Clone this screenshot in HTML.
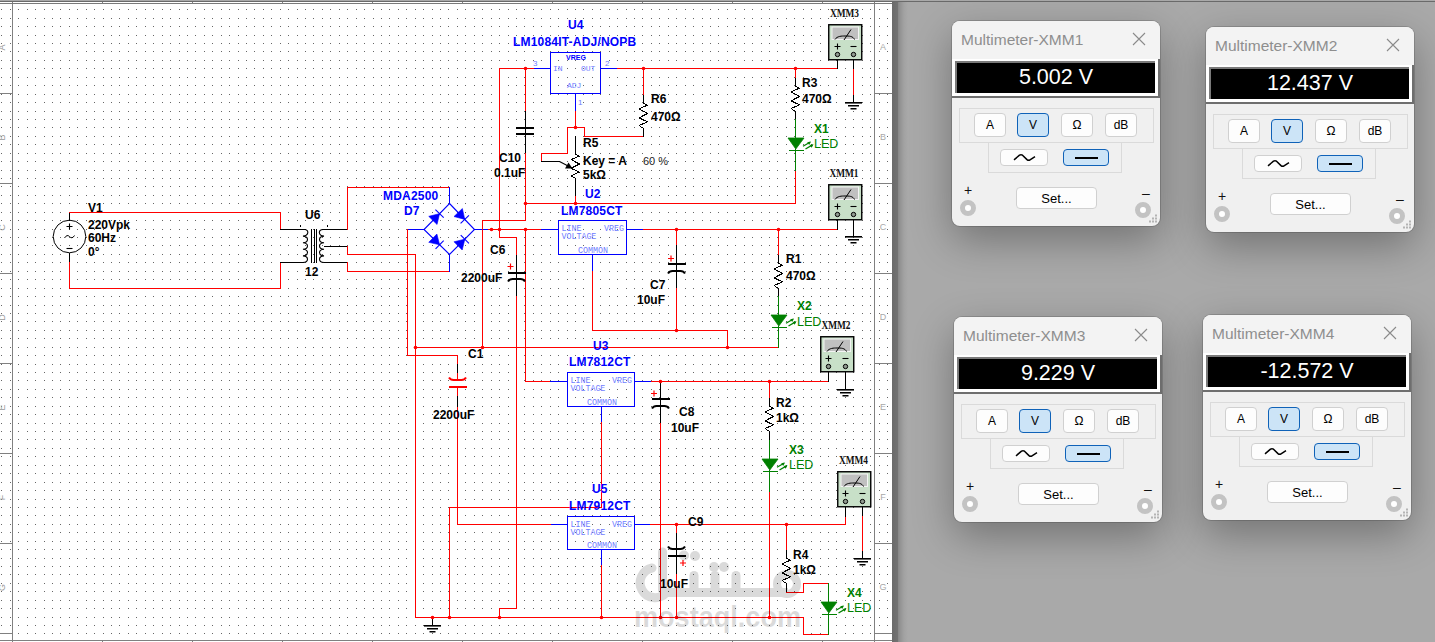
<!DOCTYPE html><html><head><meta charset="utf-8"><style>
html,body{margin:0;padding:0;width:1435px;height:642px;overflow:hidden;background:#a9a9a9;font-family:"Liberation Sans",sans-serif}
#right{position:absolute;left:892px;top:0;width:543px;height:642px;background:linear-gradient(90deg,#6a6a6a 0px,#727272 5.5px,#868686 6px,#929292 8px,#a2a2a2 12px,#a9a9a9 16px)}
#topbar{position:absolute;left:892px;top:0;width:543px;height:2px;background:linear-gradient(#a9a9a9 0 1px,#6a6a6a 1px 2px)}
.win{position:absolute;width:208px;height:205px;background:#f0f0f0;border-radius:8px;box-shadow:0 0 0 1px rgba(0,0,0,0.15),0 14px 42px rgba(0,0,0,0.32);overflow:hidden}
.title{position:absolute;left:0;top:0;width:208px;height:38px;background:#f3f3f3;color:#8e8e8e;font-size:15.5px;line-height:37px;text-indent:9px;white-space:nowrap}
.close{position:absolute;left:180px;top:11px}
.disp{position:absolute;left:0;top:38px;width:206px;height:37px;background:#fff;border-right:2px solid #6e6e6e;border-bottom:2px solid #6e6e6e}
.blk{position:absolute;left:3px;top:2px;width:198px;height:30px;background:#000;border-left:2px solid #7a7a7a;border-top:2px solid #7a7a7a;color:#fff;font-size:21.5px;line-height:28px;text-align:center}
.g1{position:absolute;left:7px;top:87px;width:193px;height:33px;border:1px solid #dadada}
.g2{position:absolute;left:36px;top:121px;width:132px;height:30px;border:1px solid #dadada;border-top:none}
.btn{position:absolute;box-sizing:border-box;background:#fdfdfd;border:1px solid #d0d0d0;border-radius:4px;text-align:center;font-size:13px;line-height:21px;color:#000}
.sel{background:#cce4f7;border-color:#0f62b8}
.pm{position:absolute;font-size:14px;color:#111;line-height:14px}
.term{position:absolute;width:6px;height:6px;border:5px solid #c3c3c3;border-radius:50%;background:#fff}
</style></head><body>
<svg width="892" height="642" style="position:absolute;left:0;top:0">
<rect x="0" y="0" width="892" height="642" fill="#ffffff"/>
<path d="M1 9.5h1m8 0h1m7 0h1m8 0h1m7 0h1m8 0h1m7 0h1m7 0h1m8 0h1m7 0h1m8 0h1m7 0h1m8 0h1m7 0h1m7 0h1m8 0h1m7 0h1m8 0h1m7 0h1m8 0h1m7 0h1m8 0h1m7 0h1m7 0h1m8 0h1m7 0h1m8 0h1m7 0h1m8 0h1m7 0h1m7 0h1m8 0h1m7 0h1m8 0h1m7 0h1m8 0h1m7 0h1m7 0h1m8 0h1m7 0h1m8 0h1m7 0h1m8 0h1m7 0h1m8 0h1m7 0h1m7 0h1m8 0h1m7 0h1m8 0h1m7 0h1m8 0h1m7 0h1m7 0h1m8 0h1m7 0h1m8 0h1m7 0h1m8 0h1m7 0h1m8 0h1m7 0h1m7 0h1m8 0h1m7 0h1m8 0h1m7 0h1m8 0h1m7 0h1m7 0h1m8 0h1m7 0h1m8 0h1m7 0h1m8 0h1m7 0h1m7 0h1m8 0h1m7 0h1m8 0h1m7 0h1m8 0h1m7 0h1m8 0h1m7 0h1m7 0h1m8 0h1m7 0h1m8 0h1m7 0h1m8 0h1m7 0h1m7 0h1m8 0h1m7 0h1m8 0h1m7 0h1m8 0h1m7 0h1m7 0h1m8 0h1m7 0h1m8 0h1m7 0h1m8 0h1m7 0h1M1 18.5h1m8 0h1m7 0h1m8 0h1m7 0h1m8 0h1m7 0h1m7 0h1m8 0h1m7 0h1m8 0h1m7 0h1m8 0h1m7 0h1m7 0h1m8 0h1m7 0h1m8 0h1m7 0h1m8 0h1m7 0h1m8 0h1m7 0h1m7 0h1m8 0h1m7 0h1m8 0h1m7 0h1m8 0h1m7 0h1m7 0h1m8 0h1m7 0h1m8 0h1m7 0h1m8 0h1m7 0h1m7 0h1m8 0h1m7 0h1m8 0h1m7 0h1m8 0h1m7 0h1m8 0h1m7 0h1m7 0h1m8 0h1m7 0h1m8 0h1m7 0h1m8 0h1m7 0h1m7 0h1m8 0h1m7 0h1m8 0h1m7 0h1m8 0h1m7 0h1m8 0h1m7 0h1m7 0h1m8 0h1m7 0h1m8 0h1m7 0h1m8 0h1m7 0h1m7 0h1m8 0h1m7 0h1m8 0h1m7 0h1m8 0h1m7 0h1m7 0h1m8 0h1m7 0h1m8 0h1m7 0h1m8 0h1m7 0h1m8 0h1m7 0h1m7 0h1m8 0h1m7 0h1m8 0h1m7 0h1m8 0h1m7 0h1m7 0h1m8 0h1m7 0h1m8 0h1m7 0h1m8 0h1m7 0h1m7 0h1m8 0h1m7 0h1m8 0h1m7 0h1m8 0h1m7 0h1M1 26.5h1m8 0h1m7 0h1m8 0h1m7 0h1m8 0h1m7 0h1m7 0h1m8 0h1m7 0h1m8 0h1m7 0h1m8 0h1m7 0h1m7 0h1m8 0h1m7 0h1m8 0h1m7 0h1m8 0h1m7 0h1m8 0h1m7 0h1m7 0h1m8 0h1m7 0h1m8 0h1m7 0h1m8 0h1m7 0h1m7 0h1m8 0h1m7 0h1m8 0h1m7 0h1m8 0h1m7 0h1m7 0h1m8 0h1m7 0h1m8 0h1m7 0h1m8 0h1m7 0h1m8 0h1m7 0h1m7 0h1m8 0h1m7 0h1m8 0h1m7 0h1m8 0h1m7 0h1m7 0h1m8 0h1m7 0h1m8 0h1m7 0h1m8 0h1m7 0h1m8 0h1m7 0h1m7 0h1m8 0h1m7 0h1m8 0h1m7 0h1m8 0h1m7 0h1m7 0h1m8 0h1m7 0h1m8 0h1m7 0h1m8 0h1m7 0h1m7 0h1m8 0h1m7 0h1m8 0h1m7 0h1m8 0h1m7 0h1m8 0h1m7 0h1m7 0h1m8 0h1m7 0h1m8 0h1m7 0h1m8 0h1m7 0h1m7 0h1m8 0h1m7 0h1m8 0h1m7 0h1m8 0h1m7 0h1m7 0h1m8 0h1m7 0h1m8 0h1m7 0h1m8 0h1m7 0h1M1 35.5h1m8 0h1m7 0h1m8 0h1m7 0h1m8 0h1m7 0h1m7 0h1m8 0h1m7 0h1m8 0h1m7 0h1m8 0h1m7 0h1m7 0h1m8 0h1m7 0h1m8 0h1m7 0h1m8 0h1m7 0h1m8 0h1m7 0h1m7 0h1m8 0h1m7 0h1m8 0h1m7 0h1m8 0h1m7 0h1m7 0h1m8 0h1m7 0h1m8 0h1m7 0h1m8 0h1m7 0h1m7 0h1m8 0h1m7 0h1m8 0h1m7 0h1m8 0h1m7 0h1m8 0h1m7 0h1m7 0h1m8 0h1m7 0h1m8 0h1m7 0h1m8 0h1m7 0h1m7 0h1m8 0h1m7 0h1m8 0h1m7 0h1m8 0h1m7 0h1m8 0h1m7 0h1m7 0h1m8 0h1m7 0h1m8 0h1m7 0h1m8 0h1m7 0h1m7 0h1m8 0h1m7 0h1m8 0h1m7 0h1m8 0h1m7 0h1m7 0h1m8 0h1m7 0h1m8 0h1m7 0h1m8 0h1m7 0h1m8 0h1m7 0h1m7 0h1m8 0h1m7 0h1m8 0h1m7 0h1m8 0h1m7 0h1m7 0h1m8 0h1m7 0h1m8 0h1m7 0h1m8 0h1m7 0h1m7 0h1m8 0h1m7 0h1m8 0h1m7 0h1m8 0h1m7 0h1M1 43.5h1m8 0h1m7 0h1m8 0h1m7 0h1m8 0h1m7 0h1m7 0h1m8 0h1m7 0h1m8 0h1m7 0h1m8 0h1m7 0h1m7 0h1m8 0h1m7 0h1m8 0h1m7 0h1m8 0h1m7 0h1m8 0h1m7 0h1m7 0h1m8 0h1m7 0h1m8 0h1m7 0h1m8 0h1m7 0h1m7 0h1m8 0h1m7 0h1m8 0h1m7 0h1m8 0h1m7 0h1m7 0h1m8 0h1m7 0h1m8 0h1m7 0h1m8 0h1m7 0h1m8 0h1m7 0h1m7 0h1m8 0h1m7 0h1m8 0h1m7 0h1m8 0h1m7 0h1m7 0h1m8 0h1m7 0h1m8 0h1m7 0h1m8 0h1m7 0h1m8 0h1m7 0h1m7 0h1m8 0h1m7 0h1m8 0h1m7 0h1m8 0h1m7 0h1m7 0h1m8 0h1m7 0h1m8 0h1m7 0h1m8 0h1m7 0h1m7 0h1m8 0h1m7 0h1m8 0h1m7 0h1m8 0h1m7 0h1m8 0h1m7 0h1m7 0h1m8 0h1m7 0h1m8 0h1m7 0h1m8 0h1m7 0h1m7 0h1m8 0h1m7 0h1m8 0h1m7 0h1m8 0h1m7 0h1m7 0h1m8 0h1m7 0h1m8 0h1m7 0h1m8 0h1m7 0h1M1 51.5h1m8 0h1m7 0h1m8 0h1m7 0h1m8 0h1m7 0h1m7 0h1m8 0h1m7 0h1m8 0h1m7 0h1m8 0h1m7 0h1m7 0h1m8 0h1m7 0h1m8 0h1m7 0h1m8 0h1m7 0h1m8 0h1m7 0h1m7 0h1m8 0h1m7 0h1m8 0h1m7 0h1m8 0h1m7 0h1m7 0h1m8 0h1m7 0h1m8 0h1m7 0h1m8 0h1m7 0h1m7 0h1m8 0h1m7 0h1m8 0h1m7 0h1m8 0h1m7 0h1m8 0h1m7 0h1m7 0h1m8 0h1m7 0h1m8 0h1m7 0h1m8 0h1m7 0h1m7 0h1m8 0h1m7 0h1m8 0h1m7 0h1m8 0h1m7 0h1m8 0h1m7 0h1m7 0h1m8 0h1m7 0h1m8 0h1m7 0h1m8 0h1m7 0h1m7 0h1m8 0h1m7 0h1m8 0h1m7 0h1m8 0h1m7 0h1m7 0h1m8 0h1m7 0h1m8 0h1m7 0h1m8 0h1m7 0h1m8 0h1m7 0h1m7 0h1m8 0h1m7 0h1m8 0h1m7 0h1m8 0h1m7 0h1m7 0h1m8 0h1m7 0h1m8 0h1m7 0h1m8 0h1m7 0h1m7 0h1m8 0h1m7 0h1m8 0h1m7 0h1m8 0h1m7 0h1M1 60.5h1m8 0h1m7 0h1m8 0h1m7 0h1m8 0h1m7 0h1m7 0h1m8 0h1m7 0h1m8 0h1m7 0h1m8 0h1m7 0h1m7 0h1m8 0h1m7 0h1m8 0h1m7 0h1m8 0h1m7 0h1m8 0h1m7 0h1m7 0h1m8 0h1m7 0h1m8 0h1m7 0h1m8 0h1m7 0h1m7 0h1m8 0h1m7 0h1m8 0h1m7 0h1m8 0h1m7 0h1m7 0h1m8 0h1m7 0h1m8 0h1m7 0h1m8 0h1m7 0h1m8 0h1m7 0h1m7 0h1m8 0h1m7 0h1m8 0h1m7 0h1m8 0h1m7 0h1m7 0h1m8 0h1m7 0h1m8 0h1m7 0h1m8 0h1m7 0h1m8 0h1m7 0h1m7 0h1m8 0h1m7 0h1m8 0h1m7 0h1m8 0h1m7 0h1m7 0h1m8 0h1m7 0h1m8 0h1m7 0h1m8 0h1m7 0h1m7 0h1m8 0h1m7 0h1m8 0h1m7 0h1m8 0h1m7 0h1m8 0h1m7 0h1m7 0h1m8 0h1m7 0h1m8 0h1m7 0h1m8 0h1m7 0h1m7 0h1m8 0h1m7 0h1m8 0h1m7 0h1m8 0h1m7 0h1m7 0h1m8 0h1m7 0h1m8 0h1m7 0h1m8 0h1m7 0h1M1 68.5h1m8 0h1m7 0h1m8 0h1m7 0h1m8 0h1m7 0h1m7 0h1m8 0h1m7 0h1m8 0h1m7 0h1m8 0h1m7 0h1m7 0h1m8 0h1m7 0h1m8 0h1m7 0h1m8 0h1m7 0h1m8 0h1m7 0h1m7 0h1m8 0h1m7 0h1m8 0h1m7 0h1m8 0h1m7 0h1m7 0h1m8 0h1m7 0h1m8 0h1m7 0h1m8 0h1m7 0h1m7 0h1m8 0h1m7 0h1m8 0h1m7 0h1m8 0h1m7 0h1m8 0h1m7 0h1m7 0h1m8 0h1m7 0h1m8 0h1m7 0h1m8 0h1m7 0h1m7 0h1m8 0h1m7 0h1m8 0h1m7 0h1m8 0h1m7 0h1m8 0h1m7 0h1m7 0h1m8 0h1m7 0h1m8 0h1m7 0h1m8 0h1m7 0h1m7 0h1m8 0h1m7 0h1m8 0h1m7 0h1m8 0h1m7 0h1m7 0h1m8 0h1m7 0h1m8 0h1m7 0h1m8 0h1m7 0h1m8 0h1m7 0h1m7 0h1m8 0h1m7 0h1m8 0h1m7 0h1m8 0h1m7 0h1m7 0h1m8 0h1m7 0h1m8 0h1m7 0h1m8 0h1m7 0h1m7 0h1m8 0h1m7 0h1m8 0h1m7 0h1m8 0h1m7 0h1M1 77.5h1m8 0h1m7 0h1m8 0h1m7 0h1m8 0h1m7 0h1m7 0h1m8 0h1m7 0h1m8 0h1m7 0h1m8 0h1m7 0h1m7 0h1m8 0h1m7 0h1m8 0h1m7 0h1m8 0h1m7 0h1m8 0h1m7 0h1m7 0h1m8 0h1m7 0h1m8 0h1m7 0h1m8 0h1m7 0h1m7 0h1m8 0h1m7 0h1m8 0h1m7 0h1m8 0h1m7 0h1m7 0h1m8 0h1m7 0h1m8 0h1m7 0h1m8 0h1m7 0h1m8 0h1m7 0h1m7 0h1m8 0h1m7 0h1m8 0h1m7 0h1m8 0h1m7 0h1m7 0h1m8 0h1m7 0h1m8 0h1m7 0h1m8 0h1m7 0h1m8 0h1m7 0h1m7 0h1m8 0h1m7 0h1m8 0h1m7 0h1m8 0h1m7 0h1m7 0h1m8 0h1m7 0h1m8 0h1m7 0h1m8 0h1m7 0h1m7 0h1m8 0h1m7 0h1m8 0h1m7 0h1m8 0h1m7 0h1m8 0h1m7 0h1m7 0h1m8 0h1m7 0h1m8 0h1m7 0h1m8 0h1m7 0h1m7 0h1m8 0h1m7 0h1m8 0h1m7 0h1m8 0h1m7 0h1m7 0h1m8 0h1m7 0h1m8 0h1m7 0h1m8 0h1m7 0h1M1 85.5h1m8 0h1m7 0h1m8 0h1m7 0h1m8 0h1m7 0h1m7 0h1m8 0h1m7 0h1m8 0h1m7 0h1m8 0h1m7 0h1m7 0h1m8 0h1m7 0h1m8 0h1m7 0h1m8 0h1m7 0h1m8 0h1m7 0h1m7 0h1m8 0h1m7 0h1m8 0h1m7 0h1m8 0h1m7 0h1m7 0h1m8 0h1m7 0h1m8 0h1m7 0h1m8 0h1m7 0h1m7 0h1m8 0h1m7 0h1m8 0h1m7 0h1m8 0h1m7 0h1m8 0h1m7 0h1m7 0h1m8 0h1m7 0h1m8 0h1m7 0h1m8 0h1m7 0h1m7 0h1m8 0h1m7 0h1m8 0h1m7 0h1m8 0h1m7 0h1m8 0h1m7 0h1m7 0h1m8 0h1m7 0h1m8 0h1m7 0h1m8 0h1m7 0h1m7 0h1m8 0h1m7 0h1m8 0h1m7 0h1m8 0h1m7 0h1m7 0h1m8 0h1m7 0h1m8 0h1m7 0h1m8 0h1m7 0h1m8 0h1m7 0h1m7 0h1m8 0h1m7 0h1m8 0h1m7 0h1m8 0h1m7 0h1m7 0h1m8 0h1m7 0h1m8 0h1m7 0h1m8 0h1m7 0h1m7 0h1m8 0h1m7 0h1m8 0h1m7 0h1m8 0h1m7 0h1M1 94.5h1m8 0h1m7 0h1m8 0h1m7 0h1m8 0h1m7 0h1m7 0h1m8 0h1m7 0h1m8 0h1m7 0h1m8 0h1m7 0h1m7 0h1m8 0h1m7 0h1m8 0h1m7 0h1m8 0h1m7 0h1m8 0h1m7 0h1m7 0h1m8 0h1m7 0h1m8 0h1m7 0h1m8 0h1m7 0h1m7 0h1m8 0h1m7 0h1m8 0h1m7 0h1m8 0h1m7 0h1m7 0h1m8 0h1m7 0h1m8 0h1m7 0h1m8 0h1m7 0h1m8 0h1m7 0h1m7 0h1m8 0h1m7 0h1m8 0h1m7 0h1m8 0h1m7 0h1m7 0h1m8 0h1m7 0h1m8 0h1m7 0h1m8 0h1m7 0h1m8 0h1m7 0h1m7 0h1m8 0h1m7 0h1m8 0h1m7 0h1m8 0h1m7 0h1m7 0h1m8 0h1m7 0h1m8 0h1m7 0h1m8 0h1m7 0h1m7 0h1m8 0h1m7 0h1m8 0h1m7 0h1m8 0h1m7 0h1m8 0h1m7 0h1m7 0h1m8 0h1m7 0h1m8 0h1m7 0h1m8 0h1m7 0h1m7 0h1m8 0h1m7 0h1m8 0h1m7 0h1m8 0h1m7 0h1m7 0h1m8 0h1m7 0h1m8 0h1m7 0h1m8 0h1m7 0h1M1 102.5h1m8 0h1m7 0h1m8 0h1m7 0h1m8 0h1m7 0h1m7 0h1m8 0h1m7 0h1m8 0h1m7 0h1m8 0h1m7 0h1m7 0h1m8 0h1m7 0h1m8 0h1m7 0h1m8 0h1m7 0h1m8 0h1m7 0h1m7 0h1m8 0h1m7 0h1m8 0h1m7 0h1m8 0h1m7 0h1m7 0h1m8 0h1m7 0h1m8 0h1m7 0h1m8 0h1m7 0h1m7 0h1m8 0h1m7 0h1m8 0h1m7 0h1m8 0h1m7 0h1m8 0h1m7 0h1m7 0h1m8 0h1m7 0h1m8 0h1m7 0h1m8 0h1m7 0h1m7 0h1m8 0h1m7 0h1m8 0h1m7 0h1m8 0h1m7 0h1m8 0h1m7 0h1m7 0h1m8 0h1m7 0h1m8 0h1m7 0h1m8 0h1m7 0h1m7 0h1m8 0h1m7 0h1m8 0h1m7 0h1m8 0h1m7 0h1m7 0h1m8 0h1m7 0h1m8 0h1m7 0h1m8 0h1m7 0h1m8 0h1m7 0h1m7 0h1m8 0h1m7 0h1m8 0h1m7 0h1m8 0h1m7 0h1m7 0h1m8 0h1m7 0h1m8 0h1m7 0h1m8 0h1m7 0h1m7 0h1m8 0h1m7 0h1m8 0h1m7 0h1m8 0h1m7 0h1M1 111.5h1m8 0h1m7 0h1m8 0h1m7 0h1m8 0h1m7 0h1m7 0h1m8 0h1m7 0h1m8 0h1m7 0h1m8 0h1m7 0h1m7 0h1m8 0h1m7 0h1m8 0h1m7 0h1m8 0h1m7 0h1m8 0h1m7 0h1m7 0h1m8 0h1m7 0h1m8 0h1m7 0h1m8 0h1m7 0h1m7 0h1m8 0h1m7 0h1m8 0h1m7 0h1m8 0h1m7 0h1m7 0h1m8 0h1m7 0h1m8 0h1m7 0h1m8 0h1m7 0h1m8 0h1m7 0h1m7 0h1m8 0h1m7 0h1m8 0h1m7 0h1m8 0h1m7 0h1m7 0h1m8 0h1m7 0h1m8 0h1m7 0h1m8 0h1m7 0h1m8 0h1m7 0h1m7 0h1m8 0h1m7 0h1m8 0h1m7 0h1m8 0h1m7 0h1m7 0h1m8 0h1m7 0h1m8 0h1m7 0h1m8 0h1m7 0h1m7 0h1m8 0h1m7 0h1m8 0h1m7 0h1m8 0h1m7 0h1m8 0h1m7 0h1m7 0h1m8 0h1m7 0h1m8 0h1m7 0h1m8 0h1m7 0h1m7 0h1m8 0h1m7 0h1m8 0h1m7 0h1m8 0h1m7 0h1m7 0h1m8 0h1m7 0h1m8 0h1m7 0h1m8 0h1m7 0h1M1 119.5h1m8 0h1m7 0h1m8 0h1m7 0h1m8 0h1m7 0h1m7 0h1m8 0h1m7 0h1m8 0h1m7 0h1m8 0h1m7 0h1m7 0h1m8 0h1m7 0h1m8 0h1m7 0h1m8 0h1m7 0h1m8 0h1m7 0h1m7 0h1m8 0h1m7 0h1m8 0h1m7 0h1m8 0h1m7 0h1m7 0h1m8 0h1m7 0h1m8 0h1m7 0h1m8 0h1m7 0h1m7 0h1m8 0h1m7 0h1m8 0h1m7 0h1m8 0h1m7 0h1m8 0h1m7 0h1m7 0h1m8 0h1m7 0h1m8 0h1m7 0h1m8 0h1m7 0h1m7 0h1m8 0h1m7 0h1m8 0h1m7 0h1m8 0h1m7 0h1m8 0h1m7 0h1m7 0h1m8 0h1m7 0h1m8 0h1m7 0h1m8 0h1m7 0h1m7 0h1m8 0h1m7 0h1m8 0h1m7 0h1m8 0h1m7 0h1m7 0h1m8 0h1m7 0h1m8 0h1m7 0h1m8 0h1m7 0h1m8 0h1m7 0h1m7 0h1m8 0h1m7 0h1m8 0h1m7 0h1m8 0h1m7 0h1m7 0h1m8 0h1m7 0h1m8 0h1m7 0h1m8 0h1m7 0h1m7 0h1m8 0h1m7 0h1m8 0h1m7 0h1m8 0h1m7 0h1M1 127.5h1m8 0h1m7 0h1m8 0h1m7 0h1m8 0h1m7 0h1m7 0h1m8 0h1m7 0h1m8 0h1m7 0h1m8 0h1m7 0h1m7 0h1m8 0h1m7 0h1m8 0h1m7 0h1m8 0h1m7 0h1m8 0h1m7 0h1m7 0h1m8 0h1m7 0h1m8 0h1m7 0h1m8 0h1m7 0h1m7 0h1m8 0h1m7 0h1m8 0h1m7 0h1m8 0h1m7 0h1m7 0h1m8 0h1m7 0h1m8 0h1m7 0h1m8 0h1m7 0h1m8 0h1m7 0h1m7 0h1m8 0h1m7 0h1m8 0h1m7 0h1m8 0h1m7 0h1m7 0h1m8 0h1m7 0h1m8 0h1m7 0h1m8 0h1m7 0h1m8 0h1m7 0h1m7 0h1m8 0h1m7 0h1m8 0h1m7 0h1m8 0h1m7 0h1m7 0h1m8 0h1m7 0h1m8 0h1m7 0h1m8 0h1m7 0h1m7 0h1m8 0h1m7 0h1m8 0h1m7 0h1m8 0h1m7 0h1m8 0h1m7 0h1m7 0h1m8 0h1m7 0h1m8 0h1m7 0h1m8 0h1m7 0h1m7 0h1m8 0h1m7 0h1m8 0h1m7 0h1m8 0h1m7 0h1m7 0h1m8 0h1m7 0h1m8 0h1m7 0h1m8 0h1m7 0h1M1 136.5h1m8 0h1m7 0h1m8 0h1m7 0h1m8 0h1m7 0h1m7 0h1m8 0h1m7 0h1m8 0h1m7 0h1m8 0h1m7 0h1m7 0h1m8 0h1m7 0h1m8 0h1m7 0h1m8 0h1m7 0h1m8 0h1m7 0h1m7 0h1m8 0h1m7 0h1m8 0h1m7 0h1m8 0h1m7 0h1m7 0h1m8 0h1m7 0h1m8 0h1m7 0h1m8 0h1m7 0h1m7 0h1m8 0h1m7 0h1m8 0h1m7 0h1m8 0h1m7 0h1m8 0h1m7 0h1m7 0h1m8 0h1m7 0h1m8 0h1m7 0h1m8 0h1m7 0h1m7 0h1m8 0h1m7 0h1m8 0h1m7 0h1m8 0h1m7 0h1m8 0h1m7 0h1m7 0h1m8 0h1m7 0h1m8 0h1m7 0h1m8 0h1m7 0h1m7 0h1m8 0h1m7 0h1m8 0h1m7 0h1m8 0h1m7 0h1m7 0h1m8 0h1m7 0h1m8 0h1m7 0h1m8 0h1m7 0h1m8 0h1m7 0h1m7 0h1m8 0h1m7 0h1m8 0h1m7 0h1m8 0h1m7 0h1m7 0h1m8 0h1m7 0h1m8 0h1m7 0h1m8 0h1m7 0h1m7 0h1m8 0h1m7 0h1m8 0h1m7 0h1m8 0h1m7 0h1M1 144.5h1m8 0h1m7 0h1m8 0h1m7 0h1m8 0h1m7 0h1m7 0h1m8 0h1m7 0h1m8 0h1m7 0h1m8 0h1m7 0h1m7 0h1m8 0h1m7 0h1m8 0h1m7 0h1m8 0h1m7 0h1m8 0h1m7 0h1m7 0h1m8 0h1m7 0h1m8 0h1m7 0h1m8 0h1m7 0h1m7 0h1m8 0h1m7 0h1m8 0h1m7 0h1m8 0h1m7 0h1m7 0h1m8 0h1m7 0h1m8 0h1m7 0h1m8 0h1m7 0h1m8 0h1m7 0h1m7 0h1m8 0h1m7 0h1m8 0h1m7 0h1m8 0h1m7 0h1m7 0h1m8 0h1m7 0h1m8 0h1m7 0h1m8 0h1m7 0h1m8 0h1m7 0h1m7 0h1m8 0h1m7 0h1m8 0h1m7 0h1m8 0h1m7 0h1m7 0h1m8 0h1m7 0h1m8 0h1m7 0h1m8 0h1m7 0h1m7 0h1m8 0h1m7 0h1m8 0h1m7 0h1m8 0h1m7 0h1m8 0h1m7 0h1m7 0h1m8 0h1m7 0h1m8 0h1m7 0h1m8 0h1m7 0h1m7 0h1m8 0h1m7 0h1m8 0h1m7 0h1m8 0h1m7 0h1m7 0h1m8 0h1m7 0h1m8 0h1m7 0h1m8 0h1m7 0h1M1 153.5h1m8 0h1m7 0h1m8 0h1m7 0h1m8 0h1m7 0h1m7 0h1m8 0h1m7 0h1m8 0h1m7 0h1m8 0h1m7 0h1m7 0h1m8 0h1m7 0h1m8 0h1m7 0h1m8 0h1m7 0h1m8 0h1m7 0h1m7 0h1m8 0h1m7 0h1m8 0h1m7 0h1m8 0h1m7 0h1m7 0h1m8 0h1m7 0h1m8 0h1m7 0h1m8 0h1m7 0h1m7 0h1m8 0h1m7 0h1m8 0h1m7 0h1m8 0h1m7 0h1m8 0h1m7 0h1m7 0h1m8 0h1m7 0h1m8 0h1m7 0h1m8 0h1m7 0h1m7 0h1m8 0h1m7 0h1m8 0h1m7 0h1m8 0h1m7 0h1m8 0h1m7 0h1m7 0h1m8 0h1m7 0h1m8 0h1m7 0h1m8 0h1m7 0h1m7 0h1m8 0h1m7 0h1m8 0h1m7 0h1m8 0h1m7 0h1m7 0h1m8 0h1m7 0h1m8 0h1m7 0h1m8 0h1m7 0h1m8 0h1m7 0h1m7 0h1m8 0h1m7 0h1m8 0h1m7 0h1m8 0h1m7 0h1m7 0h1m8 0h1m7 0h1m8 0h1m7 0h1m8 0h1m7 0h1m7 0h1m8 0h1m7 0h1m8 0h1m7 0h1m8 0h1m7 0h1M1 161.5h1m8 0h1m7 0h1m8 0h1m7 0h1m8 0h1m7 0h1m7 0h1m8 0h1m7 0h1m8 0h1m7 0h1m8 0h1m7 0h1m7 0h1m8 0h1m7 0h1m8 0h1m7 0h1m8 0h1m7 0h1m8 0h1m7 0h1m7 0h1m8 0h1m7 0h1m8 0h1m7 0h1m8 0h1m7 0h1m7 0h1m8 0h1m7 0h1m8 0h1m7 0h1m8 0h1m7 0h1m7 0h1m8 0h1m7 0h1m8 0h1m7 0h1m8 0h1m7 0h1m8 0h1m7 0h1m7 0h1m8 0h1m7 0h1m8 0h1m7 0h1m8 0h1m7 0h1m7 0h1m8 0h1m7 0h1m8 0h1m7 0h1m8 0h1m7 0h1m8 0h1m7 0h1m7 0h1m8 0h1m7 0h1m8 0h1m7 0h1m8 0h1m7 0h1m7 0h1m8 0h1m7 0h1m8 0h1m7 0h1m8 0h1m7 0h1m7 0h1m8 0h1m7 0h1m8 0h1m7 0h1m8 0h1m7 0h1m8 0h1m7 0h1m7 0h1m8 0h1m7 0h1m8 0h1m7 0h1m8 0h1m7 0h1m7 0h1m8 0h1m7 0h1m8 0h1m7 0h1m8 0h1m7 0h1m7 0h1m8 0h1m7 0h1m8 0h1m7 0h1m8 0h1m7 0h1M1 170.5h1m8 0h1m7 0h1m8 0h1m7 0h1m8 0h1m7 0h1m7 0h1m8 0h1m7 0h1m8 0h1m7 0h1m8 0h1m7 0h1m7 0h1m8 0h1m7 0h1m8 0h1m7 0h1m8 0h1m7 0h1m8 0h1m7 0h1m7 0h1m8 0h1m7 0h1m8 0h1m7 0h1m8 0h1m7 0h1m7 0h1m8 0h1m7 0h1m8 0h1m7 0h1m8 0h1m7 0h1m7 0h1m8 0h1m7 0h1m8 0h1m7 0h1m8 0h1m7 0h1m8 0h1m7 0h1m7 0h1m8 0h1m7 0h1m8 0h1m7 0h1m8 0h1m7 0h1m7 0h1m8 0h1m7 0h1m8 0h1m7 0h1m8 0h1m7 0h1m8 0h1m7 0h1m7 0h1m8 0h1m7 0h1m8 0h1m7 0h1m8 0h1m7 0h1m7 0h1m8 0h1m7 0h1m8 0h1m7 0h1m8 0h1m7 0h1m7 0h1m8 0h1m7 0h1m8 0h1m7 0h1m8 0h1m7 0h1m8 0h1m7 0h1m7 0h1m8 0h1m7 0h1m8 0h1m7 0h1m8 0h1m7 0h1m7 0h1m8 0h1m7 0h1m8 0h1m7 0h1m8 0h1m7 0h1m7 0h1m8 0h1m7 0h1m8 0h1m7 0h1m8 0h1m7 0h1M1 178.5h1m8 0h1m7 0h1m8 0h1m7 0h1m8 0h1m7 0h1m7 0h1m8 0h1m7 0h1m8 0h1m7 0h1m8 0h1m7 0h1m7 0h1m8 0h1m7 0h1m8 0h1m7 0h1m8 0h1m7 0h1m8 0h1m7 0h1m7 0h1m8 0h1m7 0h1m8 0h1m7 0h1m8 0h1m7 0h1m7 0h1m8 0h1m7 0h1m8 0h1m7 0h1m8 0h1m7 0h1m7 0h1m8 0h1m7 0h1m8 0h1m7 0h1m8 0h1m7 0h1m8 0h1m7 0h1m7 0h1m8 0h1m7 0h1m8 0h1m7 0h1m8 0h1m7 0h1m7 0h1m8 0h1m7 0h1m8 0h1m7 0h1m8 0h1m7 0h1m8 0h1m7 0h1m7 0h1m8 0h1m7 0h1m8 0h1m7 0h1m8 0h1m7 0h1m7 0h1m8 0h1m7 0h1m8 0h1m7 0h1m8 0h1m7 0h1m7 0h1m8 0h1m7 0h1m8 0h1m7 0h1m8 0h1m7 0h1m8 0h1m7 0h1m7 0h1m8 0h1m7 0h1m8 0h1m7 0h1m8 0h1m7 0h1m7 0h1m8 0h1m7 0h1m8 0h1m7 0h1m8 0h1m7 0h1m7 0h1m8 0h1m7 0h1m8 0h1m7 0h1m8 0h1m7 0h1M1 186.5h1m8 0h1m7 0h1m8 0h1m7 0h1m8 0h1m7 0h1m7 0h1m8 0h1m7 0h1m8 0h1m7 0h1m8 0h1m7 0h1m7 0h1m8 0h1m7 0h1m8 0h1m7 0h1m8 0h1m7 0h1m8 0h1m7 0h1m7 0h1m8 0h1m7 0h1m8 0h1m7 0h1m8 0h1m7 0h1m7 0h1m8 0h1m7 0h1m8 0h1m7 0h1m8 0h1m7 0h1m7 0h1m8 0h1m7 0h1m8 0h1m7 0h1m8 0h1m7 0h1m8 0h1m7 0h1m7 0h1m8 0h1m7 0h1m8 0h1m7 0h1m8 0h1m7 0h1m7 0h1m8 0h1m7 0h1m8 0h1m7 0h1m8 0h1m7 0h1m8 0h1m7 0h1m7 0h1m8 0h1m7 0h1m8 0h1m7 0h1m8 0h1m7 0h1m7 0h1m8 0h1m7 0h1m8 0h1m7 0h1m8 0h1m7 0h1m7 0h1m8 0h1m7 0h1m8 0h1m7 0h1m8 0h1m7 0h1m8 0h1m7 0h1m7 0h1m8 0h1m7 0h1m8 0h1m7 0h1m8 0h1m7 0h1m7 0h1m8 0h1m7 0h1m8 0h1m7 0h1m8 0h1m7 0h1m7 0h1m8 0h1m7 0h1m8 0h1m7 0h1m8 0h1m7 0h1M1 195.5h1m8 0h1m7 0h1m8 0h1m7 0h1m8 0h1m7 0h1m7 0h1m8 0h1m7 0h1m8 0h1m7 0h1m8 0h1m7 0h1m7 0h1m8 0h1m7 0h1m8 0h1m7 0h1m8 0h1m7 0h1m8 0h1m7 0h1m7 0h1m8 0h1m7 0h1m8 0h1m7 0h1m8 0h1m7 0h1m7 0h1m8 0h1m7 0h1m8 0h1m7 0h1m8 0h1m7 0h1m7 0h1m8 0h1m7 0h1m8 0h1m7 0h1m8 0h1m7 0h1m8 0h1m7 0h1m7 0h1m8 0h1m7 0h1m8 0h1m7 0h1m8 0h1m7 0h1m7 0h1m8 0h1m7 0h1m8 0h1m7 0h1m8 0h1m7 0h1m8 0h1m7 0h1m7 0h1m8 0h1m7 0h1m8 0h1m7 0h1m8 0h1m7 0h1m7 0h1m8 0h1m7 0h1m8 0h1m7 0h1m8 0h1m7 0h1m7 0h1m8 0h1m7 0h1m8 0h1m7 0h1m8 0h1m7 0h1m8 0h1m7 0h1m7 0h1m8 0h1m7 0h1m8 0h1m7 0h1m8 0h1m7 0h1m7 0h1m8 0h1m7 0h1m8 0h1m7 0h1m8 0h1m7 0h1m7 0h1m8 0h1m7 0h1m8 0h1m7 0h1m8 0h1m7 0h1M1 203.5h1m8 0h1m7 0h1m8 0h1m7 0h1m8 0h1m7 0h1m7 0h1m8 0h1m7 0h1m8 0h1m7 0h1m8 0h1m7 0h1m7 0h1m8 0h1m7 0h1m8 0h1m7 0h1m8 0h1m7 0h1m8 0h1m7 0h1m7 0h1m8 0h1m7 0h1m8 0h1m7 0h1m8 0h1m7 0h1m7 0h1m8 0h1m7 0h1m8 0h1m7 0h1m8 0h1m7 0h1m7 0h1m8 0h1m7 0h1m8 0h1m7 0h1m8 0h1m7 0h1m8 0h1m7 0h1m7 0h1m8 0h1m7 0h1m8 0h1m7 0h1m8 0h1m7 0h1m7 0h1m8 0h1m7 0h1m8 0h1m7 0h1m8 0h1m7 0h1m8 0h1m7 0h1m7 0h1m8 0h1m7 0h1m8 0h1m7 0h1m8 0h1m7 0h1m7 0h1m8 0h1m7 0h1m8 0h1m7 0h1m8 0h1m7 0h1m7 0h1m8 0h1m7 0h1m8 0h1m7 0h1m8 0h1m7 0h1m8 0h1m7 0h1m7 0h1m8 0h1m7 0h1m8 0h1m7 0h1m8 0h1m7 0h1m7 0h1m8 0h1m7 0h1m8 0h1m7 0h1m8 0h1m7 0h1m7 0h1m8 0h1m7 0h1m8 0h1m7 0h1m8 0h1m7 0h1M1 212.5h1m8 0h1m7 0h1m8 0h1m7 0h1m8 0h1m7 0h1m7 0h1m8 0h1m7 0h1m8 0h1m7 0h1m8 0h1m7 0h1m7 0h1m8 0h1m7 0h1m8 0h1m7 0h1m8 0h1m7 0h1m8 0h1m7 0h1m7 0h1m8 0h1m7 0h1m8 0h1m7 0h1m8 0h1m7 0h1m7 0h1m8 0h1m7 0h1m8 0h1m7 0h1m8 0h1m7 0h1m7 0h1m8 0h1m7 0h1m8 0h1m7 0h1m8 0h1m7 0h1m8 0h1m7 0h1m7 0h1m8 0h1m7 0h1m8 0h1m7 0h1m8 0h1m7 0h1m7 0h1m8 0h1m7 0h1m8 0h1m7 0h1m8 0h1m7 0h1m8 0h1m7 0h1m7 0h1m8 0h1m7 0h1m8 0h1m7 0h1m8 0h1m7 0h1m7 0h1m8 0h1m7 0h1m8 0h1m7 0h1m8 0h1m7 0h1m7 0h1m8 0h1m7 0h1m8 0h1m7 0h1m8 0h1m7 0h1m8 0h1m7 0h1m7 0h1m8 0h1m7 0h1m8 0h1m7 0h1m8 0h1m7 0h1m7 0h1m8 0h1m7 0h1m8 0h1m7 0h1m8 0h1m7 0h1m7 0h1m8 0h1m7 0h1m8 0h1m7 0h1m8 0h1m7 0h1M1 220.5h1m8 0h1m7 0h1m8 0h1m7 0h1m8 0h1m7 0h1m7 0h1m8 0h1m7 0h1m8 0h1m7 0h1m8 0h1m7 0h1m7 0h1m8 0h1m7 0h1m8 0h1m7 0h1m8 0h1m7 0h1m8 0h1m7 0h1m7 0h1m8 0h1m7 0h1m8 0h1m7 0h1m8 0h1m7 0h1m7 0h1m8 0h1m7 0h1m8 0h1m7 0h1m8 0h1m7 0h1m7 0h1m8 0h1m7 0h1m8 0h1m7 0h1m8 0h1m7 0h1m8 0h1m7 0h1m7 0h1m8 0h1m7 0h1m8 0h1m7 0h1m8 0h1m7 0h1m7 0h1m8 0h1m7 0h1m8 0h1m7 0h1m8 0h1m7 0h1m8 0h1m7 0h1m7 0h1m8 0h1m7 0h1m8 0h1m7 0h1m8 0h1m7 0h1m7 0h1m8 0h1m7 0h1m8 0h1m7 0h1m8 0h1m7 0h1m7 0h1m8 0h1m7 0h1m8 0h1m7 0h1m8 0h1m7 0h1m8 0h1m7 0h1m7 0h1m8 0h1m7 0h1m8 0h1m7 0h1m8 0h1m7 0h1m7 0h1m8 0h1m7 0h1m8 0h1m7 0h1m8 0h1m7 0h1m7 0h1m8 0h1m7 0h1m8 0h1m7 0h1m8 0h1m7 0h1M1 229.5h1m8 0h1m7 0h1m8 0h1m7 0h1m8 0h1m7 0h1m7 0h1m8 0h1m7 0h1m8 0h1m7 0h1m8 0h1m7 0h1m7 0h1m8 0h1m7 0h1m8 0h1m7 0h1m8 0h1m7 0h1m8 0h1m7 0h1m7 0h1m8 0h1m7 0h1m8 0h1m7 0h1m8 0h1m7 0h1m7 0h1m8 0h1m7 0h1m8 0h1m7 0h1m8 0h1m7 0h1m7 0h1m8 0h1m7 0h1m8 0h1m7 0h1m8 0h1m7 0h1m8 0h1m7 0h1m7 0h1m8 0h1m7 0h1m8 0h1m7 0h1m8 0h1m7 0h1m7 0h1m8 0h1m7 0h1m8 0h1m7 0h1m8 0h1m7 0h1m8 0h1m7 0h1m7 0h1m8 0h1m7 0h1m8 0h1m7 0h1m8 0h1m7 0h1m7 0h1m8 0h1m7 0h1m8 0h1m7 0h1m8 0h1m7 0h1m7 0h1m8 0h1m7 0h1m8 0h1m7 0h1m8 0h1m7 0h1m8 0h1m7 0h1m7 0h1m8 0h1m7 0h1m8 0h1m7 0h1m8 0h1m7 0h1m7 0h1m8 0h1m7 0h1m8 0h1m7 0h1m8 0h1m7 0h1m7 0h1m8 0h1m7 0h1m8 0h1m7 0h1m8 0h1m7 0h1M1 237.5h1m8 0h1m7 0h1m8 0h1m7 0h1m8 0h1m7 0h1m7 0h1m8 0h1m7 0h1m8 0h1m7 0h1m8 0h1m7 0h1m7 0h1m8 0h1m7 0h1m8 0h1m7 0h1m8 0h1m7 0h1m8 0h1m7 0h1m7 0h1m8 0h1m7 0h1m8 0h1m7 0h1m8 0h1m7 0h1m7 0h1m8 0h1m7 0h1m8 0h1m7 0h1m8 0h1m7 0h1m7 0h1m8 0h1m7 0h1m8 0h1m7 0h1m8 0h1m7 0h1m8 0h1m7 0h1m7 0h1m8 0h1m7 0h1m8 0h1m7 0h1m8 0h1m7 0h1m7 0h1m8 0h1m7 0h1m8 0h1m7 0h1m8 0h1m7 0h1m8 0h1m7 0h1m7 0h1m8 0h1m7 0h1m8 0h1m7 0h1m8 0h1m7 0h1m7 0h1m8 0h1m7 0h1m8 0h1m7 0h1m8 0h1m7 0h1m7 0h1m8 0h1m7 0h1m8 0h1m7 0h1m8 0h1m7 0h1m8 0h1m7 0h1m7 0h1m8 0h1m7 0h1m8 0h1m7 0h1m8 0h1m7 0h1m7 0h1m8 0h1m7 0h1m8 0h1m7 0h1m8 0h1m7 0h1m7 0h1m8 0h1m7 0h1m8 0h1m7 0h1m8 0h1m7 0h1M1 245.5h1m8 0h1m7 0h1m8 0h1m7 0h1m8 0h1m7 0h1m7 0h1m8 0h1m7 0h1m8 0h1m7 0h1m8 0h1m7 0h1m7 0h1m8 0h1m7 0h1m8 0h1m7 0h1m8 0h1m7 0h1m8 0h1m7 0h1m7 0h1m8 0h1m7 0h1m8 0h1m7 0h1m8 0h1m7 0h1m7 0h1m8 0h1m7 0h1m8 0h1m7 0h1m8 0h1m7 0h1m7 0h1m8 0h1m7 0h1m8 0h1m7 0h1m8 0h1m7 0h1m8 0h1m7 0h1m7 0h1m8 0h1m7 0h1m8 0h1m7 0h1m8 0h1m7 0h1m7 0h1m8 0h1m7 0h1m8 0h1m7 0h1m8 0h1m7 0h1m8 0h1m7 0h1m7 0h1m8 0h1m7 0h1m8 0h1m7 0h1m8 0h1m7 0h1m7 0h1m8 0h1m7 0h1m8 0h1m7 0h1m8 0h1m7 0h1m7 0h1m8 0h1m7 0h1m8 0h1m7 0h1m8 0h1m7 0h1m8 0h1m7 0h1m7 0h1m8 0h1m7 0h1m8 0h1m7 0h1m8 0h1m7 0h1m7 0h1m8 0h1m7 0h1m8 0h1m7 0h1m8 0h1m7 0h1m7 0h1m8 0h1m7 0h1m8 0h1m7 0h1m8 0h1m7 0h1M1 254.5h1m8 0h1m7 0h1m8 0h1m7 0h1m8 0h1m7 0h1m7 0h1m8 0h1m7 0h1m8 0h1m7 0h1m8 0h1m7 0h1m7 0h1m8 0h1m7 0h1m8 0h1m7 0h1m8 0h1m7 0h1m8 0h1m7 0h1m7 0h1m8 0h1m7 0h1m8 0h1m7 0h1m8 0h1m7 0h1m7 0h1m8 0h1m7 0h1m8 0h1m7 0h1m8 0h1m7 0h1m7 0h1m8 0h1m7 0h1m8 0h1m7 0h1m8 0h1m7 0h1m8 0h1m7 0h1m7 0h1m8 0h1m7 0h1m8 0h1m7 0h1m8 0h1m7 0h1m7 0h1m8 0h1m7 0h1m8 0h1m7 0h1m8 0h1m7 0h1m8 0h1m7 0h1m7 0h1m8 0h1m7 0h1m8 0h1m7 0h1m8 0h1m7 0h1m7 0h1m8 0h1m7 0h1m8 0h1m7 0h1m8 0h1m7 0h1m7 0h1m8 0h1m7 0h1m8 0h1m7 0h1m8 0h1m7 0h1m8 0h1m7 0h1m7 0h1m8 0h1m7 0h1m8 0h1m7 0h1m8 0h1m7 0h1m7 0h1m8 0h1m7 0h1m8 0h1m7 0h1m8 0h1m7 0h1m7 0h1m8 0h1m7 0h1m8 0h1m7 0h1m8 0h1m7 0h1M1 262.5h1m8 0h1m7 0h1m8 0h1m7 0h1m8 0h1m7 0h1m7 0h1m8 0h1m7 0h1m8 0h1m7 0h1m8 0h1m7 0h1m7 0h1m8 0h1m7 0h1m8 0h1m7 0h1m8 0h1m7 0h1m8 0h1m7 0h1m7 0h1m8 0h1m7 0h1m8 0h1m7 0h1m8 0h1m7 0h1m7 0h1m8 0h1m7 0h1m8 0h1m7 0h1m8 0h1m7 0h1m7 0h1m8 0h1m7 0h1m8 0h1m7 0h1m8 0h1m7 0h1m8 0h1m7 0h1m7 0h1m8 0h1m7 0h1m8 0h1m7 0h1m8 0h1m7 0h1m7 0h1m8 0h1m7 0h1m8 0h1m7 0h1m8 0h1m7 0h1m8 0h1m7 0h1m7 0h1m8 0h1m7 0h1m8 0h1m7 0h1m8 0h1m7 0h1m7 0h1m8 0h1m7 0h1m8 0h1m7 0h1m8 0h1m7 0h1m7 0h1m8 0h1m7 0h1m8 0h1m7 0h1m8 0h1m7 0h1m8 0h1m7 0h1m7 0h1m8 0h1m7 0h1m8 0h1m7 0h1m8 0h1m7 0h1m7 0h1m8 0h1m7 0h1m8 0h1m7 0h1m8 0h1m7 0h1m7 0h1m8 0h1m7 0h1m8 0h1m7 0h1m8 0h1m7 0h1M1 271.5h1m8 0h1m7 0h1m8 0h1m7 0h1m8 0h1m7 0h1m7 0h1m8 0h1m7 0h1m8 0h1m7 0h1m8 0h1m7 0h1m7 0h1m8 0h1m7 0h1m8 0h1m7 0h1m8 0h1m7 0h1m8 0h1m7 0h1m7 0h1m8 0h1m7 0h1m8 0h1m7 0h1m8 0h1m7 0h1m7 0h1m8 0h1m7 0h1m8 0h1m7 0h1m8 0h1m7 0h1m7 0h1m8 0h1m7 0h1m8 0h1m7 0h1m8 0h1m7 0h1m8 0h1m7 0h1m7 0h1m8 0h1m7 0h1m8 0h1m7 0h1m8 0h1m7 0h1m7 0h1m8 0h1m7 0h1m8 0h1m7 0h1m8 0h1m7 0h1m8 0h1m7 0h1m7 0h1m8 0h1m7 0h1m8 0h1m7 0h1m8 0h1m7 0h1m7 0h1m8 0h1m7 0h1m8 0h1m7 0h1m8 0h1m7 0h1m7 0h1m8 0h1m7 0h1m8 0h1m7 0h1m8 0h1m7 0h1m8 0h1m7 0h1m7 0h1m8 0h1m7 0h1m8 0h1m7 0h1m8 0h1m7 0h1m7 0h1m8 0h1m7 0h1m8 0h1m7 0h1m8 0h1m7 0h1m7 0h1m8 0h1m7 0h1m8 0h1m7 0h1m8 0h1m7 0h1M1 279.5h1m8 0h1m7 0h1m8 0h1m7 0h1m8 0h1m7 0h1m7 0h1m8 0h1m7 0h1m8 0h1m7 0h1m8 0h1m7 0h1m7 0h1m8 0h1m7 0h1m8 0h1m7 0h1m8 0h1m7 0h1m8 0h1m7 0h1m7 0h1m8 0h1m7 0h1m8 0h1m7 0h1m8 0h1m7 0h1m7 0h1m8 0h1m7 0h1m8 0h1m7 0h1m8 0h1m7 0h1m7 0h1m8 0h1m7 0h1m8 0h1m7 0h1m8 0h1m7 0h1m8 0h1m7 0h1m7 0h1m8 0h1m7 0h1m8 0h1m7 0h1m8 0h1m7 0h1m7 0h1m8 0h1m7 0h1m8 0h1m7 0h1m8 0h1m7 0h1m8 0h1m7 0h1m7 0h1m8 0h1m7 0h1m8 0h1m7 0h1m8 0h1m7 0h1m7 0h1m8 0h1m7 0h1m8 0h1m7 0h1m8 0h1m7 0h1m7 0h1m8 0h1m7 0h1m8 0h1m7 0h1m8 0h1m7 0h1m8 0h1m7 0h1m7 0h1m8 0h1m7 0h1m8 0h1m7 0h1m8 0h1m7 0h1m7 0h1m8 0h1m7 0h1m8 0h1m7 0h1m8 0h1m7 0h1m7 0h1m8 0h1m7 0h1m8 0h1m7 0h1m8 0h1m7 0h1M1 288.5h1m8 0h1m7 0h1m8 0h1m7 0h1m8 0h1m7 0h1m7 0h1m8 0h1m7 0h1m8 0h1m7 0h1m8 0h1m7 0h1m7 0h1m8 0h1m7 0h1m8 0h1m7 0h1m8 0h1m7 0h1m8 0h1m7 0h1m7 0h1m8 0h1m7 0h1m8 0h1m7 0h1m8 0h1m7 0h1m7 0h1m8 0h1m7 0h1m8 0h1m7 0h1m8 0h1m7 0h1m7 0h1m8 0h1m7 0h1m8 0h1m7 0h1m8 0h1m7 0h1m8 0h1m7 0h1m7 0h1m8 0h1m7 0h1m8 0h1m7 0h1m8 0h1m7 0h1m7 0h1m8 0h1m7 0h1m8 0h1m7 0h1m8 0h1m7 0h1m8 0h1m7 0h1m7 0h1m8 0h1m7 0h1m8 0h1m7 0h1m8 0h1m7 0h1m7 0h1m8 0h1m7 0h1m8 0h1m7 0h1m8 0h1m7 0h1m7 0h1m8 0h1m7 0h1m8 0h1m7 0h1m8 0h1m7 0h1m8 0h1m7 0h1m7 0h1m8 0h1m7 0h1m8 0h1m7 0h1m8 0h1m7 0h1m7 0h1m8 0h1m7 0h1m8 0h1m7 0h1m8 0h1m7 0h1m7 0h1m8 0h1m7 0h1m8 0h1m7 0h1m8 0h1m7 0h1M1 296.5h1m8 0h1m7 0h1m8 0h1m7 0h1m8 0h1m7 0h1m7 0h1m8 0h1m7 0h1m8 0h1m7 0h1m8 0h1m7 0h1m7 0h1m8 0h1m7 0h1m8 0h1m7 0h1m8 0h1m7 0h1m8 0h1m7 0h1m7 0h1m8 0h1m7 0h1m8 0h1m7 0h1m8 0h1m7 0h1m7 0h1m8 0h1m7 0h1m8 0h1m7 0h1m8 0h1m7 0h1m7 0h1m8 0h1m7 0h1m8 0h1m7 0h1m8 0h1m7 0h1m8 0h1m7 0h1m7 0h1m8 0h1m7 0h1m8 0h1m7 0h1m8 0h1m7 0h1m7 0h1m8 0h1m7 0h1m8 0h1m7 0h1m8 0h1m7 0h1m8 0h1m7 0h1m7 0h1m8 0h1m7 0h1m8 0h1m7 0h1m8 0h1m7 0h1m7 0h1m8 0h1m7 0h1m8 0h1m7 0h1m8 0h1m7 0h1m7 0h1m8 0h1m7 0h1m8 0h1m7 0h1m8 0h1m7 0h1m8 0h1m7 0h1m7 0h1m8 0h1m7 0h1m8 0h1m7 0h1m8 0h1m7 0h1m7 0h1m8 0h1m7 0h1m8 0h1m7 0h1m8 0h1m7 0h1m7 0h1m8 0h1m7 0h1m8 0h1m7 0h1m8 0h1m7 0h1M1 305.5h1m8 0h1m7 0h1m8 0h1m7 0h1m8 0h1m7 0h1m7 0h1m8 0h1m7 0h1m8 0h1m7 0h1m8 0h1m7 0h1m7 0h1m8 0h1m7 0h1m8 0h1m7 0h1m8 0h1m7 0h1m8 0h1m7 0h1m7 0h1m8 0h1m7 0h1m8 0h1m7 0h1m8 0h1m7 0h1m7 0h1m8 0h1m7 0h1m8 0h1m7 0h1m8 0h1m7 0h1m7 0h1m8 0h1m7 0h1m8 0h1m7 0h1m8 0h1m7 0h1m8 0h1m7 0h1m7 0h1m8 0h1m7 0h1m8 0h1m7 0h1m8 0h1m7 0h1m7 0h1m8 0h1m7 0h1m8 0h1m7 0h1m8 0h1m7 0h1m8 0h1m7 0h1m7 0h1m8 0h1m7 0h1m8 0h1m7 0h1m8 0h1m7 0h1m7 0h1m8 0h1m7 0h1m8 0h1m7 0h1m8 0h1m7 0h1m7 0h1m8 0h1m7 0h1m8 0h1m7 0h1m8 0h1m7 0h1m8 0h1m7 0h1m7 0h1m8 0h1m7 0h1m8 0h1m7 0h1m8 0h1m7 0h1m7 0h1m8 0h1m7 0h1m8 0h1m7 0h1m8 0h1m7 0h1m7 0h1m8 0h1m7 0h1m8 0h1m7 0h1m8 0h1m7 0h1M1 313.5h1m8 0h1m7 0h1m8 0h1m7 0h1m8 0h1m7 0h1m7 0h1m8 0h1m7 0h1m8 0h1m7 0h1m8 0h1m7 0h1m7 0h1m8 0h1m7 0h1m8 0h1m7 0h1m8 0h1m7 0h1m8 0h1m7 0h1m7 0h1m8 0h1m7 0h1m8 0h1m7 0h1m8 0h1m7 0h1m7 0h1m8 0h1m7 0h1m8 0h1m7 0h1m8 0h1m7 0h1m7 0h1m8 0h1m7 0h1m8 0h1m7 0h1m8 0h1m7 0h1m8 0h1m7 0h1m7 0h1m8 0h1m7 0h1m8 0h1m7 0h1m8 0h1m7 0h1m7 0h1m8 0h1m7 0h1m8 0h1m7 0h1m8 0h1m7 0h1m8 0h1m7 0h1m7 0h1m8 0h1m7 0h1m8 0h1m7 0h1m8 0h1m7 0h1m7 0h1m8 0h1m7 0h1m8 0h1m7 0h1m8 0h1m7 0h1m7 0h1m8 0h1m7 0h1m8 0h1m7 0h1m8 0h1m7 0h1m8 0h1m7 0h1m7 0h1m8 0h1m7 0h1m8 0h1m7 0h1m8 0h1m7 0h1m7 0h1m8 0h1m7 0h1m8 0h1m7 0h1m8 0h1m7 0h1m7 0h1m8 0h1m7 0h1m8 0h1m7 0h1m8 0h1m7 0h1M1 321.5h1m8 0h1m7 0h1m8 0h1m7 0h1m8 0h1m7 0h1m7 0h1m8 0h1m7 0h1m8 0h1m7 0h1m8 0h1m7 0h1m7 0h1m8 0h1m7 0h1m8 0h1m7 0h1m8 0h1m7 0h1m8 0h1m7 0h1m7 0h1m8 0h1m7 0h1m8 0h1m7 0h1m8 0h1m7 0h1m7 0h1m8 0h1m7 0h1m8 0h1m7 0h1m8 0h1m7 0h1m7 0h1m8 0h1m7 0h1m8 0h1m7 0h1m8 0h1m7 0h1m8 0h1m7 0h1m7 0h1m8 0h1m7 0h1m8 0h1m7 0h1m8 0h1m7 0h1m7 0h1m8 0h1m7 0h1m8 0h1m7 0h1m8 0h1m7 0h1m8 0h1m7 0h1m7 0h1m8 0h1m7 0h1m8 0h1m7 0h1m8 0h1m7 0h1m7 0h1m8 0h1m7 0h1m8 0h1m7 0h1m8 0h1m7 0h1m7 0h1m8 0h1m7 0h1m8 0h1m7 0h1m8 0h1m7 0h1m8 0h1m7 0h1m7 0h1m8 0h1m7 0h1m8 0h1m7 0h1m8 0h1m7 0h1m7 0h1m8 0h1m7 0h1m8 0h1m7 0h1m8 0h1m7 0h1m7 0h1m8 0h1m7 0h1m8 0h1m7 0h1m8 0h1m7 0h1M1 330.5h1m8 0h1m7 0h1m8 0h1m7 0h1m8 0h1m7 0h1m7 0h1m8 0h1m7 0h1m8 0h1m7 0h1m8 0h1m7 0h1m7 0h1m8 0h1m7 0h1m8 0h1m7 0h1m8 0h1m7 0h1m8 0h1m7 0h1m7 0h1m8 0h1m7 0h1m8 0h1m7 0h1m8 0h1m7 0h1m7 0h1m8 0h1m7 0h1m8 0h1m7 0h1m8 0h1m7 0h1m7 0h1m8 0h1m7 0h1m8 0h1m7 0h1m8 0h1m7 0h1m8 0h1m7 0h1m7 0h1m8 0h1m7 0h1m8 0h1m7 0h1m8 0h1m7 0h1m7 0h1m8 0h1m7 0h1m8 0h1m7 0h1m8 0h1m7 0h1m8 0h1m7 0h1m7 0h1m8 0h1m7 0h1m8 0h1m7 0h1m8 0h1m7 0h1m7 0h1m8 0h1m7 0h1m8 0h1m7 0h1m8 0h1m7 0h1m7 0h1m8 0h1m7 0h1m8 0h1m7 0h1m8 0h1m7 0h1m8 0h1m7 0h1m7 0h1m8 0h1m7 0h1m8 0h1m7 0h1m8 0h1m7 0h1m7 0h1m8 0h1m7 0h1m8 0h1m7 0h1m8 0h1m7 0h1m7 0h1m8 0h1m7 0h1m8 0h1m7 0h1m8 0h1m7 0h1M1 338.5h1m8 0h1m7 0h1m8 0h1m7 0h1m8 0h1m7 0h1m7 0h1m8 0h1m7 0h1m8 0h1m7 0h1m8 0h1m7 0h1m7 0h1m8 0h1m7 0h1m8 0h1m7 0h1m8 0h1m7 0h1m8 0h1m7 0h1m7 0h1m8 0h1m7 0h1m8 0h1m7 0h1m8 0h1m7 0h1m7 0h1m8 0h1m7 0h1m8 0h1m7 0h1m8 0h1m7 0h1m7 0h1m8 0h1m7 0h1m8 0h1m7 0h1m8 0h1m7 0h1m8 0h1m7 0h1m7 0h1m8 0h1m7 0h1m8 0h1m7 0h1m8 0h1m7 0h1m7 0h1m8 0h1m7 0h1m8 0h1m7 0h1m8 0h1m7 0h1m8 0h1m7 0h1m7 0h1m8 0h1m7 0h1m8 0h1m7 0h1m8 0h1m7 0h1m7 0h1m8 0h1m7 0h1m8 0h1m7 0h1m8 0h1m7 0h1m7 0h1m8 0h1m7 0h1m8 0h1m7 0h1m8 0h1m7 0h1m8 0h1m7 0h1m7 0h1m8 0h1m7 0h1m8 0h1m7 0h1m8 0h1m7 0h1m7 0h1m8 0h1m7 0h1m8 0h1m7 0h1m8 0h1m7 0h1m7 0h1m8 0h1m7 0h1m8 0h1m7 0h1m8 0h1m7 0h1M1 347.5h1m8 0h1m7 0h1m8 0h1m7 0h1m8 0h1m7 0h1m7 0h1m8 0h1m7 0h1m8 0h1m7 0h1m8 0h1m7 0h1m7 0h1m8 0h1m7 0h1m8 0h1m7 0h1m8 0h1m7 0h1m8 0h1m7 0h1m7 0h1m8 0h1m7 0h1m8 0h1m7 0h1m8 0h1m7 0h1m7 0h1m8 0h1m7 0h1m8 0h1m7 0h1m8 0h1m7 0h1m7 0h1m8 0h1m7 0h1m8 0h1m7 0h1m8 0h1m7 0h1m8 0h1m7 0h1m7 0h1m8 0h1m7 0h1m8 0h1m7 0h1m8 0h1m7 0h1m7 0h1m8 0h1m7 0h1m8 0h1m7 0h1m8 0h1m7 0h1m8 0h1m7 0h1m7 0h1m8 0h1m7 0h1m8 0h1m7 0h1m8 0h1m7 0h1m7 0h1m8 0h1m7 0h1m8 0h1m7 0h1m8 0h1m7 0h1m7 0h1m8 0h1m7 0h1m8 0h1m7 0h1m8 0h1m7 0h1m8 0h1m7 0h1m7 0h1m8 0h1m7 0h1m8 0h1m7 0h1m8 0h1m7 0h1m7 0h1m8 0h1m7 0h1m8 0h1m7 0h1m8 0h1m7 0h1m7 0h1m8 0h1m7 0h1m8 0h1m7 0h1m8 0h1m7 0h1M1 355.5h1m8 0h1m7 0h1m8 0h1m7 0h1m8 0h1m7 0h1m7 0h1m8 0h1m7 0h1m8 0h1m7 0h1m8 0h1m7 0h1m7 0h1m8 0h1m7 0h1m8 0h1m7 0h1m8 0h1m7 0h1m8 0h1m7 0h1m7 0h1m8 0h1m7 0h1m8 0h1m7 0h1m8 0h1m7 0h1m7 0h1m8 0h1m7 0h1m8 0h1m7 0h1m8 0h1m7 0h1m7 0h1m8 0h1m7 0h1m8 0h1m7 0h1m8 0h1m7 0h1m8 0h1m7 0h1m7 0h1m8 0h1m7 0h1m8 0h1m7 0h1m8 0h1m7 0h1m7 0h1m8 0h1m7 0h1m8 0h1m7 0h1m8 0h1m7 0h1m8 0h1m7 0h1m7 0h1m8 0h1m7 0h1m8 0h1m7 0h1m8 0h1m7 0h1m7 0h1m8 0h1m7 0h1m8 0h1m7 0h1m8 0h1m7 0h1m7 0h1m8 0h1m7 0h1m8 0h1m7 0h1m8 0h1m7 0h1m8 0h1m7 0h1m7 0h1m8 0h1m7 0h1m8 0h1m7 0h1m8 0h1m7 0h1m7 0h1m8 0h1m7 0h1m8 0h1m7 0h1m8 0h1m7 0h1m7 0h1m8 0h1m7 0h1m8 0h1m7 0h1m8 0h1m7 0h1M1 364.5h1m8 0h1m7 0h1m8 0h1m7 0h1m8 0h1m7 0h1m7 0h1m8 0h1m7 0h1m8 0h1m7 0h1m8 0h1m7 0h1m7 0h1m8 0h1m7 0h1m8 0h1m7 0h1m8 0h1m7 0h1m8 0h1m7 0h1m7 0h1m8 0h1m7 0h1m8 0h1m7 0h1m8 0h1m7 0h1m7 0h1m8 0h1m7 0h1m8 0h1m7 0h1m8 0h1m7 0h1m7 0h1m8 0h1m7 0h1m8 0h1m7 0h1m8 0h1m7 0h1m8 0h1m7 0h1m7 0h1m8 0h1m7 0h1m8 0h1m7 0h1m8 0h1m7 0h1m7 0h1m8 0h1m7 0h1m8 0h1m7 0h1m8 0h1m7 0h1m8 0h1m7 0h1m7 0h1m8 0h1m7 0h1m8 0h1m7 0h1m8 0h1m7 0h1m7 0h1m8 0h1m7 0h1m8 0h1m7 0h1m8 0h1m7 0h1m7 0h1m8 0h1m7 0h1m8 0h1m7 0h1m8 0h1m7 0h1m8 0h1m7 0h1m7 0h1m8 0h1m7 0h1m8 0h1m7 0h1m8 0h1m7 0h1m7 0h1m8 0h1m7 0h1m8 0h1m7 0h1m8 0h1m7 0h1m7 0h1m8 0h1m7 0h1m8 0h1m7 0h1m8 0h1m7 0h1M1 372.5h1m8 0h1m7 0h1m8 0h1m7 0h1m8 0h1m7 0h1m7 0h1m8 0h1m7 0h1m8 0h1m7 0h1m8 0h1m7 0h1m7 0h1m8 0h1m7 0h1m8 0h1m7 0h1m8 0h1m7 0h1m8 0h1m7 0h1m7 0h1m8 0h1m7 0h1m8 0h1m7 0h1m8 0h1m7 0h1m7 0h1m8 0h1m7 0h1m8 0h1m7 0h1m8 0h1m7 0h1m7 0h1m8 0h1m7 0h1m8 0h1m7 0h1m8 0h1m7 0h1m8 0h1m7 0h1m7 0h1m8 0h1m7 0h1m8 0h1m7 0h1m8 0h1m7 0h1m7 0h1m8 0h1m7 0h1m8 0h1m7 0h1m8 0h1m7 0h1m8 0h1m7 0h1m7 0h1m8 0h1m7 0h1m8 0h1m7 0h1m8 0h1m7 0h1m7 0h1m8 0h1m7 0h1m8 0h1m7 0h1m8 0h1m7 0h1m7 0h1m8 0h1m7 0h1m8 0h1m7 0h1m8 0h1m7 0h1m8 0h1m7 0h1m7 0h1m8 0h1m7 0h1m8 0h1m7 0h1m8 0h1m7 0h1m7 0h1m8 0h1m7 0h1m8 0h1m7 0h1m8 0h1m7 0h1m7 0h1m8 0h1m7 0h1m8 0h1m7 0h1m8 0h1m7 0h1M1 380.5h1m8 0h1m7 0h1m8 0h1m7 0h1m8 0h1m7 0h1m7 0h1m8 0h1m7 0h1m8 0h1m7 0h1m8 0h1m7 0h1m7 0h1m8 0h1m7 0h1m8 0h1m7 0h1m8 0h1m7 0h1m8 0h1m7 0h1m7 0h1m8 0h1m7 0h1m8 0h1m7 0h1m8 0h1m7 0h1m7 0h1m8 0h1m7 0h1m8 0h1m7 0h1m8 0h1m7 0h1m7 0h1m8 0h1m7 0h1m8 0h1m7 0h1m8 0h1m7 0h1m8 0h1m7 0h1m7 0h1m8 0h1m7 0h1m8 0h1m7 0h1m8 0h1m7 0h1m7 0h1m8 0h1m7 0h1m8 0h1m7 0h1m8 0h1m7 0h1m8 0h1m7 0h1m7 0h1m8 0h1m7 0h1m8 0h1m7 0h1m8 0h1m7 0h1m7 0h1m8 0h1m7 0h1m8 0h1m7 0h1m8 0h1m7 0h1m7 0h1m8 0h1m7 0h1m8 0h1m7 0h1m8 0h1m7 0h1m8 0h1m7 0h1m7 0h1m8 0h1m7 0h1m8 0h1m7 0h1m8 0h1m7 0h1m7 0h1m8 0h1m7 0h1m8 0h1m7 0h1m8 0h1m7 0h1m7 0h1m8 0h1m7 0h1m8 0h1m7 0h1m8 0h1m7 0h1M1 389.5h1m8 0h1m7 0h1m8 0h1m7 0h1m8 0h1m7 0h1m7 0h1m8 0h1m7 0h1m8 0h1m7 0h1m8 0h1m7 0h1m7 0h1m8 0h1m7 0h1m8 0h1m7 0h1m8 0h1m7 0h1m8 0h1m7 0h1m7 0h1m8 0h1m7 0h1m8 0h1m7 0h1m8 0h1m7 0h1m7 0h1m8 0h1m7 0h1m8 0h1m7 0h1m8 0h1m7 0h1m7 0h1m8 0h1m7 0h1m8 0h1m7 0h1m8 0h1m7 0h1m8 0h1m7 0h1m7 0h1m8 0h1m7 0h1m8 0h1m7 0h1m8 0h1m7 0h1m7 0h1m8 0h1m7 0h1m8 0h1m7 0h1m8 0h1m7 0h1m8 0h1m7 0h1m7 0h1m8 0h1m7 0h1m8 0h1m7 0h1m8 0h1m7 0h1m7 0h1m8 0h1m7 0h1m8 0h1m7 0h1m8 0h1m7 0h1m7 0h1m8 0h1m7 0h1m8 0h1m7 0h1m8 0h1m7 0h1m8 0h1m7 0h1m7 0h1m8 0h1m7 0h1m8 0h1m7 0h1m8 0h1m7 0h1m7 0h1m8 0h1m7 0h1m8 0h1m7 0h1m8 0h1m7 0h1m7 0h1m8 0h1m7 0h1m8 0h1m7 0h1m8 0h1m7 0h1M1 397.5h1m8 0h1m7 0h1m8 0h1m7 0h1m8 0h1m7 0h1m7 0h1m8 0h1m7 0h1m8 0h1m7 0h1m8 0h1m7 0h1m7 0h1m8 0h1m7 0h1m8 0h1m7 0h1m8 0h1m7 0h1m8 0h1m7 0h1m7 0h1m8 0h1m7 0h1m8 0h1m7 0h1m8 0h1m7 0h1m7 0h1m8 0h1m7 0h1m8 0h1m7 0h1m8 0h1m7 0h1m7 0h1m8 0h1m7 0h1m8 0h1m7 0h1m8 0h1m7 0h1m8 0h1m7 0h1m7 0h1m8 0h1m7 0h1m8 0h1m7 0h1m8 0h1m7 0h1m7 0h1m8 0h1m7 0h1m8 0h1m7 0h1m8 0h1m7 0h1m8 0h1m7 0h1m7 0h1m8 0h1m7 0h1m8 0h1m7 0h1m8 0h1m7 0h1m7 0h1m8 0h1m7 0h1m8 0h1m7 0h1m8 0h1m7 0h1m7 0h1m8 0h1m7 0h1m8 0h1m7 0h1m8 0h1m7 0h1m8 0h1m7 0h1m7 0h1m8 0h1m7 0h1m8 0h1m7 0h1m8 0h1m7 0h1m7 0h1m8 0h1m7 0h1m8 0h1m7 0h1m8 0h1m7 0h1m7 0h1m8 0h1m7 0h1m8 0h1m7 0h1m8 0h1m7 0h1M1 406.5h1m8 0h1m7 0h1m8 0h1m7 0h1m8 0h1m7 0h1m7 0h1m8 0h1m7 0h1m8 0h1m7 0h1m8 0h1m7 0h1m7 0h1m8 0h1m7 0h1m8 0h1m7 0h1m8 0h1m7 0h1m8 0h1m7 0h1m7 0h1m8 0h1m7 0h1m8 0h1m7 0h1m8 0h1m7 0h1m7 0h1m8 0h1m7 0h1m8 0h1m7 0h1m8 0h1m7 0h1m7 0h1m8 0h1m7 0h1m8 0h1m7 0h1m8 0h1m7 0h1m8 0h1m7 0h1m7 0h1m8 0h1m7 0h1m8 0h1m7 0h1m8 0h1m7 0h1m7 0h1m8 0h1m7 0h1m8 0h1m7 0h1m8 0h1m7 0h1m8 0h1m7 0h1m7 0h1m8 0h1m7 0h1m8 0h1m7 0h1m8 0h1m7 0h1m7 0h1m8 0h1m7 0h1m8 0h1m7 0h1m8 0h1m7 0h1m7 0h1m8 0h1m7 0h1m8 0h1m7 0h1m8 0h1m7 0h1m8 0h1m7 0h1m7 0h1m8 0h1m7 0h1m8 0h1m7 0h1m8 0h1m7 0h1m7 0h1m8 0h1m7 0h1m8 0h1m7 0h1m8 0h1m7 0h1m7 0h1m8 0h1m7 0h1m8 0h1m7 0h1m8 0h1m7 0h1M1 414.5h1m8 0h1m7 0h1m8 0h1m7 0h1m8 0h1m7 0h1m7 0h1m8 0h1m7 0h1m8 0h1m7 0h1m8 0h1m7 0h1m7 0h1m8 0h1m7 0h1m8 0h1m7 0h1m8 0h1m7 0h1m8 0h1m7 0h1m7 0h1m8 0h1m7 0h1m8 0h1m7 0h1m8 0h1m7 0h1m7 0h1m8 0h1m7 0h1m8 0h1m7 0h1m8 0h1m7 0h1m7 0h1m8 0h1m7 0h1m8 0h1m7 0h1m8 0h1m7 0h1m8 0h1m7 0h1m7 0h1m8 0h1m7 0h1m8 0h1m7 0h1m8 0h1m7 0h1m7 0h1m8 0h1m7 0h1m8 0h1m7 0h1m8 0h1m7 0h1m8 0h1m7 0h1m7 0h1m8 0h1m7 0h1m8 0h1m7 0h1m8 0h1m7 0h1m7 0h1m8 0h1m7 0h1m8 0h1m7 0h1m8 0h1m7 0h1m7 0h1m8 0h1m7 0h1m8 0h1m7 0h1m8 0h1m7 0h1m8 0h1m7 0h1m7 0h1m8 0h1m7 0h1m8 0h1m7 0h1m8 0h1m7 0h1m7 0h1m8 0h1m7 0h1m8 0h1m7 0h1m8 0h1m7 0h1m7 0h1m8 0h1m7 0h1m8 0h1m7 0h1m8 0h1m7 0h1M1 423.5h1m8 0h1m7 0h1m8 0h1m7 0h1m8 0h1m7 0h1m7 0h1m8 0h1m7 0h1m8 0h1m7 0h1m8 0h1m7 0h1m7 0h1m8 0h1m7 0h1m8 0h1m7 0h1m8 0h1m7 0h1m8 0h1m7 0h1m7 0h1m8 0h1m7 0h1m8 0h1m7 0h1m8 0h1m7 0h1m7 0h1m8 0h1m7 0h1m8 0h1m7 0h1m8 0h1m7 0h1m7 0h1m8 0h1m7 0h1m8 0h1m7 0h1m8 0h1m7 0h1m8 0h1m7 0h1m7 0h1m8 0h1m7 0h1m8 0h1m7 0h1m8 0h1m7 0h1m7 0h1m8 0h1m7 0h1m8 0h1m7 0h1m8 0h1m7 0h1m8 0h1m7 0h1m7 0h1m8 0h1m7 0h1m8 0h1m7 0h1m8 0h1m7 0h1m7 0h1m8 0h1m7 0h1m8 0h1m7 0h1m8 0h1m7 0h1m7 0h1m8 0h1m7 0h1m8 0h1m7 0h1m8 0h1m7 0h1m8 0h1m7 0h1m7 0h1m8 0h1m7 0h1m8 0h1m7 0h1m8 0h1m7 0h1m7 0h1m8 0h1m7 0h1m8 0h1m7 0h1m8 0h1m7 0h1m7 0h1m8 0h1m7 0h1m8 0h1m7 0h1m8 0h1m7 0h1M1 431.5h1m8 0h1m7 0h1m8 0h1m7 0h1m8 0h1m7 0h1m7 0h1m8 0h1m7 0h1m8 0h1m7 0h1m8 0h1m7 0h1m7 0h1m8 0h1m7 0h1m8 0h1m7 0h1m8 0h1m7 0h1m8 0h1m7 0h1m7 0h1m8 0h1m7 0h1m8 0h1m7 0h1m8 0h1m7 0h1m7 0h1m8 0h1m7 0h1m8 0h1m7 0h1m8 0h1m7 0h1m7 0h1m8 0h1m7 0h1m8 0h1m7 0h1m8 0h1m7 0h1m8 0h1m7 0h1m7 0h1m8 0h1m7 0h1m8 0h1m7 0h1m8 0h1m7 0h1m7 0h1m8 0h1m7 0h1m8 0h1m7 0h1m8 0h1m7 0h1m8 0h1m7 0h1m7 0h1m8 0h1m7 0h1m8 0h1m7 0h1m8 0h1m7 0h1m7 0h1m8 0h1m7 0h1m8 0h1m7 0h1m8 0h1m7 0h1m7 0h1m8 0h1m7 0h1m8 0h1m7 0h1m8 0h1m7 0h1m8 0h1m7 0h1m7 0h1m8 0h1m7 0h1m8 0h1m7 0h1m8 0h1m7 0h1m7 0h1m8 0h1m7 0h1m8 0h1m7 0h1m8 0h1m7 0h1m7 0h1m8 0h1m7 0h1m8 0h1m7 0h1m8 0h1m7 0h1M1 439.5h1m8 0h1m7 0h1m8 0h1m7 0h1m8 0h1m7 0h1m7 0h1m8 0h1m7 0h1m8 0h1m7 0h1m8 0h1m7 0h1m7 0h1m8 0h1m7 0h1m8 0h1m7 0h1m8 0h1m7 0h1m8 0h1m7 0h1m7 0h1m8 0h1m7 0h1m8 0h1m7 0h1m8 0h1m7 0h1m7 0h1m8 0h1m7 0h1m8 0h1m7 0h1m8 0h1m7 0h1m7 0h1m8 0h1m7 0h1m8 0h1m7 0h1m8 0h1m7 0h1m8 0h1m7 0h1m7 0h1m8 0h1m7 0h1m8 0h1m7 0h1m8 0h1m7 0h1m7 0h1m8 0h1m7 0h1m8 0h1m7 0h1m8 0h1m7 0h1m8 0h1m7 0h1m7 0h1m8 0h1m7 0h1m8 0h1m7 0h1m8 0h1m7 0h1m7 0h1m8 0h1m7 0h1m8 0h1m7 0h1m8 0h1m7 0h1m7 0h1m8 0h1m7 0h1m8 0h1m7 0h1m8 0h1m7 0h1m8 0h1m7 0h1m7 0h1m8 0h1m7 0h1m8 0h1m7 0h1m8 0h1m7 0h1m7 0h1m8 0h1m7 0h1m8 0h1m7 0h1m8 0h1m7 0h1m7 0h1m8 0h1m7 0h1m8 0h1m7 0h1m8 0h1m7 0h1M1 448.5h1m8 0h1m7 0h1m8 0h1m7 0h1m8 0h1m7 0h1m7 0h1m8 0h1m7 0h1m8 0h1m7 0h1m8 0h1m7 0h1m7 0h1m8 0h1m7 0h1m8 0h1m7 0h1m8 0h1m7 0h1m8 0h1m7 0h1m7 0h1m8 0h1m7 0h1m8 0h1m7 0h1m8 0h1m7 0h1m7 0h1m8 0h1m7 0h1m8 0h1m7 0h1m8 0h1m7 0h1m7 0h1m8 0h1m7 0h1m8 0h1m7 0h1m8 0h1m7 0h1m8 0h1m7 0h1m7 0h1m8 0h1m7 0h1m8 0h1m7 0h1m8 0h1m7 0h1m7 0h1m8 0h1m7 0h1m8 0h1m7 0h1m8 0h1m7 0h1m8 0h1m7 0h1m7 0h1m8 0h1m7 0h1m8 0h1m7 0h1m8 0h1m7 0h1m7 0h1m8 0h1m7 0h1m8 0h1m7 0h1m8 0h1m7 0h1m7 0h1m8 0h1m7 0h1m8 0h1m7 0h1m8 0h1m7 0h1m8 0h1m7 0h1m7 0h1m8 0h1m7 0h1m8 0h1m7 0h1m8 0h1m7 0h1m7 0h1m8 0h1m7 0h1m8 0h1m7 0h1m8 0h1m7 0h1m7 0h1m8 0h1m7 0h1m8 0h1m7 0h1m8 0h1m7 0h1M1 456.5h1m8 0h1m7 0h1m8 0h1m7 0h1m8 0h1m7 0h1m7 0h1m8 0h1m7 0h1m8 0h1m7 0h1m8 0h1m7 0h1m7 0h1m8 0h1m7 0h1m8 0h1m7 0h1m8 0h1m7 0h1m8 0h1m7 0h1m7 0h1m8 0h1m7 0h1m8 0h1m7 0h1m8 0h1m7 0h1m7 0h1m8 0h1m7 0h1m8 0h1m7 0h1m8 0h1m7 0h1m7 0h1m8 0h1m7 0h1m8 0h1m7 0h1m8 0h1m7 0h1m8 0h1m7 0h1m7 0h1m8 0h1m7 0h1m8 0h1m7 0h1m8 0h1m7 0h1m7 0h1m8 0h1m7 0h1m8 0h1m7 0h1m8 0h1m7 0h1m8 0h1m7 0h1m7 0h1m8 0h1m7 0h1m8 0h1m7 0h1m8 0h1m7 0h1m7 0h1m8 0h1m7 0h1m8 0h1m7 0h1m8 0h1m7 0h1m7 0h1m8 0h1m7 0h1m8 0h1m7 0h1m8 0h1m7 0h1m8 0h1m7 0h1m7 0h1m8 0h1m7 0h1m8 0h1m7 0h1m8 0h1m7 0h1m7 0h1m8 0h1m7 0h1m8 0h1m7 0h1m8 0h1m7 0h1m7 0h1m8 0h1m7 0h1m8 0h1m7 0h1m8 0h1m7 0h1M1 465.5h1m8 0h1m7 0h1m8 0h1m7 0h1m8 0h1m7 0h1m7 0h1m8 0h1m7 0h1m8 0h1m7 0h1m8 0h1m7 0h1m7 0h1m8 0h1m7 0h1m8 0h1m7 0h1m8 0h1m7 0h1m8 0h1m7 0h1m7 0h1m8 0h1m7 0h1m8 0h1m7 0h1m8 0h1m7 0h1m7 0h1m8 0h1m7 0h1m8 0h1m7 0h1m8 0h1m7 0h1m7 0h1m8 0h1m7 0h1m8 0h1m7 0h1m8 0h1m7 0h1m8 0h1m7 0h1m7 0h1m8 0h1m7 0h1m8 0h1m7 0h1m8 0h1m7 0h1m7 0h1m8 0h1m7 0h1m8 0h1m7 0h1m8 0h1m7 0h1m8 0h1m7 0h1m7 0h1m8 0h1m7 0h1m8 0h1m7 0h1m8 0h1m7 0h1m7 0h1m8 0h1m7 0h1m8 0h1m7 0h1m8 0h1m7 0h1m7 0h1m8 0h1m7 0h1m8 0h1m7 0h1m8 0h1m7 0h1m8 0h1m7 0h1m7 0h1m8 0h1m7 0h1m8 0h1m7 0h1m8 0h1m7 0h1m7 0h1m8 0h1m7 0h1m8 0h1m7 0h1m8 0h1m7 0h1m7 0h1m8 0h1m7 0h1m8 0h1m7 0h1m8 0h1m7 0h1M1 473.5h1m8 0h1m7 0h1m8 0h1m7 0h1m8 0h1m7 0h1m7 0h1m8 0h1m7 0h1m8 0h1m7 0h1m8 0h1m7 0h1m7 0h1m8 0h1m7 0h1m8 0h1m7 0h1m8 0h1m7 0h1m8 0h1m7 0h1m7 0h1m8 0h1m7 0h1m8 0h1m7 0h1m8 0h1m7 0h1m7 0h1m8 0h1m7 0h1m8 0h1m7 0h1m8 0h1m7 0h1m7 0h1m8 0h1m7 0h1m8 0h1m7 0h1m8 0h1m7 0h1m8 0h1m7 0h1m7 0h1m8 0h1m7 0h1m8 0h1m7 0h1m8 0h1m7 0h1m7 0h1m8 0h1m7 0h1m8 0h1m7 0h1m8 0h1m7 0h1m8 0h1m7 0h1m7 0h1m8 0h1m7 0h1m8 0h1m7 0h1m8 0h1m7 0h1m7 0h1m8 0h1m7 0h1m8 0h1m7 0h1m8 0h1m7 0h1m7 0h1m8 0h1m7 0h1m8 0h1m7 0h1m8 0h1m7 0h1m8 0h1m7 0h1m7 0h1m8 0h1m7 0h1m8 0h1m7 0h1m8 0h1m7 0h1m7 0h1m8 0h1m7 0h1m8 0h1m7 0h1m8 0h1m7 0h1m7 0h1m8 0h1m7 0h1m8 0h1m7 0h1m8 0h1m7 0h1M1 482.5h1m8 0h1m7 0h1m8 0h1m7 0h1m8 0h1m7 0h1m7 0h1m8 0h1m7 0h1m8 0h1m7 0h1m8 0h1m7 0h1m7 0h1m8 0h1m7 0h1m8 0h1m7 0h1m8 0h1m7 0h1m8 0h1m7 0h1m7 0h1m8 0h1m7 0h1m8 0h1m7 0h1m8 0h1m7 0h1m7 0h1m8 0h1m7 0h1m8 0h1m7 0h1m8 0h1m7 0h1m7 0h1m8 0h1m7 0h1m8 0h1m7 0h1m8 0h1m7 0h1m8 0h1m7 0h1m7 0h1m8 0h1m7 0h1m8 0h1m7 0h1m8 0h1m7 0h1m7 0h1m8 0h1m7 0h1m8 0h1m7 0h1m8 0h1m7 0h1m8 0h1m7 0h1m7 0h1m8 0h1m7 0h1m8 0h1m7 0h1m8 0h1m7 0h1m7 0h1m8 0h1m7 0h1m8 0h1m7 0h1m8 0h1m7 0h1m7 0h1m8 0h1m7 0h1m8 0h1m7 0h1m8 0h1m7 0h1m8 0h1m7 0h1m7 0h1m8 0h1m7 0h1m8 0h1m7 0h1m8 0h1m7 0h1m7 0h1m8 0h1m7 0h1m8 0h1m7 0h1m8 0h1m7 0h1m7 0h1m8 0h1m7 0h1m8 0h1m7 0h1m8 0h1m7 0h1M1 490.5h1m8 0h1m7 0h1m8 0h1m7 0h1m8 0h1m7 0h1m7 0h1m8 0h1m7 0h1m8 0h1m7 0h1m8 0h1m7 0h1m7 0h1m8 0h1m7 0h1m8 0h1m7 0h1m8 0h1m7 0h1m8 0h1m7 0h1m7 0h1m8 0h1m7 0h1m8 0h1m7 0h1m8 0h1m7 0h1m7 0h1m8 0h1m7 0h1m8 0h1m7 0h1m8 0h1m7 0h1m7 0h1m8 0h1m7 0h1m8 0h1m7 0h1m8 0h1m7 0h1m8 0h1m7 0h1m7 0h1m8 0h1m7 0h1m8 0h1m7 0h1m8 0h1m7 0h1m7 0h1m8 0h1m7 0h1m8 0h1m7 0h1m8 0h1m7 0h1m8 0h1m7 0h1m7 0h1m8 0h1m7 0h1m8 0h1m7 0h1m8 0h1m7 0h1m7 0h1m8 0h1m7 0h1m8 0h1m7 0h1m8 0h1m7 0h1m7 0h1m8 0h1m7 0h1m8 0h1m7 0h1m8 0h1m7 0h1m8 0h1m7 0h1m7 0h1m8 0h1m7 0h1m8 0h1m7 0h1m8 0h1m7 0h1m7 0h1m8 0h1m7 0h1m8 0h1m7 0h1m8 0h1m7 0h1m7 0h1m8 0h1m7 0h1m8 0h1m7 0h1m8 0h1m7 0h1M1 499.5h1m8 0h1m7 0h1m8 0h1m7 0h1m8 0h1m7 0h1m7 0h1m8 0h1m7 0h1m8 0h1m7 0h1m8 0h1m7 0h1m7 0h1m8 0h1m7 0h1m8 0h1m7 0h1m8 0h1m7 0h1m8 0h1m7 0h1m7 0h1m8 0h1m7 0h1m8 0h1m7 0h1m8 0h1m7 0h1m7 0h1m8 0h1m7 0h1m8 0h1m7 0h1m8 0h1m7 0h1m7 0h1m8 0h1m7 0h1m8 0h1m7 0h1m8 0h1m7 0h1m8 0h1m7 0h1m7 0h1m8 0h1m7 0h1m8 0h1m7 0h1m8 0h1m7 0h1m7 0h1m8 0h1m7 0h1m8 0h1m7 0h1m8 0h1m7 0h1m8 0h1m7 0h1m7 0h1m8 0h1m7 0h1m8 0h1m7 0h1m8 0h1m7 0h1m7 0h1m8 0h1m7 0h1m8 0h1m7 0h1m8 0h1m7 0h1m7 0h1m8 0h1m7 0h1m8 0h1m7 0h1m8 0h1m7 0h1m8 0h1m7 0h1m7 0h1m8 0h1m7 0h1m8 0h1m7 0h1m8 0h1m7 0h1m7 0h1m8 0h1m7 0h1m8 0h1m7 0h1m8 0h1m7 0h1m7 0h1m8 0h1m7 0h1m8 0h1m7 0h1m8 0h1m7 0h1M1 507.5h1m8 0h1m7 0h1m8 0h1m7 0h1m8 0h1m7 0h1m7 0h1m8 0h1m7 0h1m8 0h1m7 0h1m8 0h1m7 0h1m7 0h1m8 0h1m7 0h1m8 0h1m7 0h1m8 0h1m7 0h1m8 0h1m7 0h1m7 0h1m8 0h1m7 0h1m8 0h1m7 0h1m8 0h1m7 0h1m7 0h1m8 0h1m7 0h1m8 0h1m7 0h1m8 0h1m7 0h1m7 0h1m8 0h1m7 0h1m8 0h1m7 0h1m8 0h1m7 0h1m8 0h1m7 0h1m7 0h1m8 0h1m7 0h1m8 0h1m7 0h1m8 0h1m7 0h1m7 0h1m8 0h1m7 0h1m8 0h1m7 0h1m8 0h1m7 0h1m8 0h1m7 0h1m7 0h1m8 0h1m7 0h1m8 0h1m7 0h1m8 0h1m7 0h1m7 0h1m8 0h1m7 0h1m8 0h1m7 0h1m8 0h1m7 0h1m7 0h1m8 0h1m7 0h1m8 0h1m7 0h1m8 0h1m7 0h1m8 0h1m7 0h1m7 0h1m8 0h1m7 0h1m8 0h1m7 0h1m8 0h1m7 0h1m7 0h1m8 0h1m7 0h1m8 0h1m7 0h1m8 0h1m7 0h1m7 0h1m8 0h1m7 0h1m8 0h1m7 0h1m8 0h1m7 0h1M1 515.5h1m8 0h1m7 0h1m8 0h1m7 0h1m8 0h1m7 0h1m7 0h1m8 0h1m7 0h1m8 0h1m7 0h1m8 0h1m7 0h1m7 0h1m8 0h1m7 0h1m8 0h1m7 0h1m8 0h1m7 0h1m8 0h1m7 0h1m7 0h1m8 0h1m7 0h1m8 0h1m7 0h1m8 0h1m7 0h1m7 0h1m8 0h1m7 0h1m8 0h1m7 0h1m8 0h1m7 0h1m7 0h1m8 0h1m7 0h1m8 0h1m7 0h1m8 0h1m7 0h1m8 0h1m7 0h1m7 0h1m8 0h1m7 0h1m8 0h1m7 0h1m8 0h1m7 0h1m7 0h1m8 0h1m7 0h1m8 0h1m7 0h1m8 0h1m7 0h1m8 0h1m7 0h1m7 0h1m8 0h1m7 0h1m8 0h1m7 0h1m8 0h1m7 0h1m7 0h1m8 0h1m7 0h1m8 0h1m7 0h1m8 0h1m7 0h1m7 0h1m8 0h1m7 0h1m8 0h1m7 0h1m8 0h1m7 0h1m8 0h1m7 0h1m7 0h1m8 0h1m7 0h1m8 0h1m7 0h1m8 0h1m7 0h1m7 0h1m8 0h1m7 0h1m8 0h1m7 0h1m8 0h1m7 0h1m7 0h1m8 0h1m7 0h1m8 0h1m7 0h1m8 0h1m7 0h1M1 524.5h1m8 0h1m7 0h1m8 0h1m7 0h1m8 0h1m7 0h1m7 0h1m8 0h1m7 0h1m8 0h1m7 0h1m8 0h1m7 0h1m7 0h1m8 0h1m7 0h1m8 0h1m7 0h1m8 0h1m7 0h1m8 0h1m7 0h1m7 0h1m8 0h1m7 0h1m8 0h1m7 0h1m8 0h1m7 0h1m7 0h1m8 0h1m7 0h1m8 0h1m7 0h1m8 0h1m7 0h1m7 0h1m8 0h1m7 0h1m8 0h1m7 0h1m8 0h1m7 0h1m8 0h1m7 0h1m7 0h1m8 0h1m7 0h1m8 0h1m7 0h1m8 0h1m7 0h1m7 0h1m8 0h1m7 0h1m8 0h1m7 0h1m8 0h1m7 0h1m8 0h1m7 0h1m7 0h1m8 0h1m7 0h1m8 0h1m7 0h1m8 0h1m7 0h1m7 0h1m8 0h1m7 0h1m8 0h1m7 0h1m8 0h1m7 0h1m7 0h1m8 0h1m7 0h1m8 0h1m7 0h1m8 0h1m7 0h1m8 0h1m7 0h1m7 0h1m8 0h1m7 0h1m8 0h1m7 0h1m8 0h1m7 0h1m7 0h1m8 0h1m7 0h1m8 0h1m7 0h1m8 0h1m7 0h1m7 0h1m8 0h1m7 0h1m8 0h1m7 0h1m8 0h1m7 0h1M1 532.5h1m8 0h1m7 0h1m8 0h1m7 0h1m8 0h1m7 0h1m7 0h1m8 0h1m7 0h1m8 0h1m7 0h1m8 0h1m7 0h1m7 0h1m8 0h1m7 0h1m8 0h1m7 0h1m8 0h1m7 0h1m8 0h1m7 0h1m7 0h1m8 0h1m7 0h1m8 0h1m7 0h1m8 0h1m7 0h1m7 0h1m8 0h1m7 0h1m8 0h1m7 0h1m8 0h1m7 0h1m7 0h1m8 0h1m7 0h1m8 0h1m7 0h1m8 0h1m7 0h1m8 0h1m7 0h1m7 0h1m8 0h1m7 0h1m8 0h1m7 0h1m8 0h1m7 0h1m7 0h1m8 0h1m7 0h1m8 0h1m7 0h1m8 0h1m7 0h1m8 0h1m7 0h1m7 0h1m8 0h1m7 0h1m8 0h1m7 0h1m8 0h1m7 0h1m7 0h1m8 0h1m7 0h1m8 0h1m7 0h1m8 0h1m7 0h1m7 0h1m8 0h1m7 0h1m8 0h1m7 0h1m8 0h1m7 0h1m8 0h1m7 0h1m7 0h1m8 0h1m7 0h1m8 0h1m7 0h1m8 0h1m7 0h1m7 0h1m8 0h1m7 0h1m8 0h1m7 0h1m8 0h1m7 0h1m7 0h1m8 0h1m7 0h1m8 0h1m7 0h1m8 0h1m7 0h1M1 541.5h1m8 0h1m7 0h1m8 0h1m7 0h1m8 0h1m7 0h1m7 0h1m8 0h1m7 0h1m8 0h1m7 0h1m8 0h1m7 0h1m7 0h1m8 0h1m7 0h1m8 0h1m7 0h1m8 0h1m7 0h1m8 0h1m7 0h1m7 0h1m8 0h1m7 0h1m8 0h1m7 0h1m8 0h1m7 0h1m7 0h1m8 0h1m7 0h1m8 0h1m7 0h1m8 0h1m7 0h1m7 0h1m8 0h1m7 0h1m8 0h1m7 0h1m8 0h1m7 0h1m8 0h1m7 0h1m7 0h1m8 0h1m7 0h1m8 0h1m7 0h1m8 0h1m7 0h1m7 0h1m8 0h1m7 0h1m8 0h1m7 0h1m8 0h1m7 0h1m8 0h1m7 0h1m7 0h1m8 0h1m7 0h1m8 0h1m7 0h1m8 0h1m7 0h1m7 0h1m8 0h1m7 0h1m8 0h1m7 0h1m8 0h1m7 0h1m7 0h1m8 0h1m7 0h1m8 0h1m7 0h1m8 0h1m7 0h1m8 0h1m7 0h1m7 0h1m8 0h1m7 0h1m8 0h1m7 0h1m8 0h1m7 0h1m7 0h1m8 0h1m7 0h1m8 0h1m7 0h1m8 0h1m7 0h1m7 0h1m8 0h1m7 0h1m8 0h1m7 0h1m8 0h1m7 0h1M1 549.5h1m8 0h1m7 0h1m8 0h1m7 0h1m8 0h1m7 0h1m7 0h1m8 0h1m7 0h1m8 0h1m7 0h1m8 0h1m7 0h1m7 0h1m8 0h1m7 0h1m8 0h1m7 0h1m8 0h1m7 0h1m8 0h1m7 0h1m7 0h1m8 0h1m7 0h1m8 0h1m7 0h1m8 0h1m7 0h1m7 0h1m8 0h1m7 0h1m8 0h1m7 0h1m8 0h1m7 0h1m7 0h1m8 0h1m7 0h1m8 0h1m7 0h1m8 0h1m7 0h1m8 0h1m7 0h1m7 0h1m8 0h1m7 0h1m8 0h1m7 0h1m8 0h1m7 0h1m7 0h1m8 0h1m7 0h1m8 0h1m7 0h1m8 0h1m7 0h1m8 0h1m7 0h1m7 0h1m8 0h1m7 0h1m8 0h1m7 0h1m8 0h1m7 0h1m7 0h1m8 0h1m7 0h1m8 0h1m7 0h1m8 0h1m7 0h1m7 0h1m8 0h1m7 0h1m8 0h1m7 0h1m8 0h1m7 0h1m8 0h1m7 0h1m7 0h1m8 0h1m7 0h1m8 0h1m7 0h1m8 0h1m7 0h1m7 0h1m8 0h1m7 0h1m8 0h1m7 0h1m8 0h1m7 0h1m7 0h1m8 0h1m7 0h1m8 0h1m7 0h1m8 0h1m7 0h1M1 558.5h1m8 0h1m7 0h1m8 0h1m7 0h1m8 0h1m7 0h1m7 0h1m8 0h1m7 0h1m8 0h1m7 0h1m8 0h1m7 0h1m7 0h1m8 0h1m7 0h1m8 0h1m7 0h1m8 0h1m7 0h1m8 0h1m7 0h1m7 0h1m8 0h1m7 0h1m8 0h1m7 0h1m8 0h1m7 0h1m7 0h1m8 0h1m7 0h1m8 0h1m7 0h1m8 0h1m7 0h1m7 0h1m8 0h1m7 0h1m8 0h1m7 0h1m8 0h1m7 0h1m8 0h1m7 0h1m7 0h1m8 0h1m7 0h1m8 0h1m7 0h1m8 0h1m7 0h1m7 0h1m8 0h1m7 0h1m8 0h1m7 0h1m8 0h1m7 0h1m8 0h1m7 0h1m7 0h1m8 0h1m7 0h1m8 0h1m7 0h1m8 0h1m7 0h1m7 0h1m8 0h1m7 0h1m8 0h1m7 0h1m8 0h1m7 0h1m7 0h1m8 0h1m7 0h1m8 0h1m7 0h1m8 0h1m7 0h1m8 0h1m7 0h1m7 0h1m8 0h1m7 0h1m8 0h1m7 0h1m8 0h1m7 0h1m7 0h1m8 0h1m7 0h1m8 0h1m7 0h1m8 0h1m7 0h1m7 0h1m8 0h1m7 0h1m8 0h1m7 0h1m8 0h1m7 0h1M1 566.5h1m8 0h1m7 0h1m8 0h1m7 0h1m8 0h1m7 0h1m7 0h1m8 0h1m7 0h1m8 0h1m7 0h1m8 0h1m7 0h1m7 0h1m8 0h1m7 0h1m8 0h1m7 0h1m8 0h1m7 0h1m8 0h1m7 0h1m7 0h1m8 0h1m7 0h1m8 0h1m7 0h1m8 0h1m7 0h1m7 0h1m8 0h1m7 0h1m8 0h1m7 0h1m8 0h1m7 0h1m7 0h1m8 0h1m7 0h1m8 0h1m7 0h1m8 0h1m7 0h1m8 0h1m7 0h1m7 0h1m8 0h1m7 0h1m8 0h1m7 0h1m8 0h1m7 0h1m7 0h1m8 0h1m7 0h1m8 0h1m7 0h1m8 0h1m7 0h1m8 0h1m7 0h1m7 0h1m8 0h1m7 0h1m8 0h1m7 0h1m8 0h1m7 0h1m7 0h1m8 0h1m7 0h1m8 0h1m7 0h1m8 0h1m7 0h1m7 0h1m8 0h1m7 0h1m8 0h1m7 0h1m8 0h1m7 0h1m8 0h1m7 0h1m7 0h1m8 0h1m7 0h1m8 0h1m7 0h1m8 0h1m7 0h1m7 0h1m8 0h1m7 0h1m8 0h1m7 0h1m8 0h1m7 0h1m7 0h1m8 0h1m7 0h1m8 0h1m7 0h1m8 0h1m7 0h1M1 574.5h1m8 0h1m7 0h1m8 0h1m7 0h1m8 0h1m7 0h1m7 0h1m8 0h1m7 0h1m8 0h1m7 0h1m8 0h1m7 0h1m7 0h1m8 0h1m7 0h1m8 0h1m7 0h1m8 0h1m7 0h1m8 0h1m7 0h1m7 0h1m8 0h1m7 0h1m8 0h1m7 0h1m8 0h1m7 0h1m7 0h1m8 0h1m7 0h1m8 0h1m7 0h1m8 0h1m7 0h1m7 0h1m8 0h1m7 0h1m8 0h1m7 0h1m8 0h1m7 0h1m8 0h1m7 0h1m7 0h1m8 0h1m7 0h1m8 0h1m7 0h1m8 0h1m7 0h1m7 0h1m8 0h1m7 0h1m8 0h1m7 0h1m8 0h1m7 0h1m8 0h1m7 0h1m7 0h1m8 0h1m7 0h1m8 0h1m7 0h1m8 0h1m7 0h1m7 0h1m8 0h1m7 0h1m8 0h1m7 0h1m8 0h1m7 0h1m7 0h1m8 0h1m7 0h1m8 0h1m7 0h1m8 0h1m7 0h1m8 0h1m7 0h1m7 0h1m8 0h1m7 0h1m8 0h1m7 0h1m8 0h1m7 0h1m7 0h1m8 0h1m7 0h1m8 0h1m7 0h1m8 0h1m7 0h1m7 0h1m8 0h1m7 0h1m8 0h1m7 0h1m8 0h1m7 0h1M1 583.5h1m8 0h1m7 0h1m8 0h1m7 0h1m8 0h1m7 0h1m7 0h1m8 0h1m7 0h1m8 0h1m7 0h1m8 0h1m7 0h1m7 0h1m8 0h1m7 0h1m8 0h1m7 0h1m8 0h1m7 0h1m8 0h1m7 0h1m7 0h1m8 0h1m7 0h1m8 0h1m7 0h1m8 0h1m7 0h1m7 0h1m8 0h1m7 0h1m8 0h1m7 0h1m8 0h1m7 0h1m7 0h1m8 0h1m7 0h1m8 0h1m7 0h1m8 0h1m7 0h1m8 0h1m7 0h1m7 0h1m8 0h1m7 0h1m8 0h1m7 0h1m8 0h1m7 0h1m7 0h1m8 0h1m7 0h1m8 0h1m7 0h1m8 0h1m7 0h1m8 0h1m7 0h1m7 0h1m8 0h1m7 0h1m8 0h1m7 0h1m8 0h1m7 0h1m7 0h1m8 0h1m7 0h1m8 0h1m7 0h1m8 0h1m7 0h1m7 0h1m8 0h1m7 0h1m8 0h1m7 0h1m8 0h1m7 0h1m8 0h1m7 0h1m7 0h1m8 0h1m7 0h1m8 0h1m7 0h1m8 0h1m7 0h1m7 0h1m8 0h1m7 0h1m8 0h1m7 0h1m8 0h1m7 0h1m7 0h1m8 0h1m7 0h1m8 0h1m7 0h1m8 0h1m7 0h1M1 591.5h1m8 0h1m7 0h1m8 0h1m7 0h1m8 0h1m7 0h1m7 0h1m8 0h1m7 0h1m8 0h1m7 0h1m8 0h1m7 0h1m7 0h1m8 0h1m7 0h1m8 0h1m7 0h1m8 0h1m7 0h1m8 0h1m7 0h1m7 0h1m8 0h1m7 0h1m8 0h1m7 0h1m8 0h1m7 0h1m7 0h1m8 0h1m7 0h1m8 0h1m7 0h1m8 0h1m7 0h1m7 0h1m8 0h1m7 0h1m8 0h1m7 0h1m8 0h1m7 0h1m8 0h1m7 0h1m7 0h1m8 0h1m7 0h1m8 0h1m7 0h1m8 0h1m7 0h1m7 0h1m8 0h1m7 0h1m8 0h1m7 0h1m8 0h1m7 0h1m8 0h1m7 0h1m7 0h1m8 0h1m7 0h1m8 0h1m7 0h1m8 0h1m7 0h1m7 0h1m8 0h1m7 0h1m8 0h1m7 0h1m8 0h1m7 0h1m7 0h1m8 0h1m7 0h1m8 0h1m7 0h1m8 0h1m7 0h1m8 0h1m7 0h1m7 0h1m8 0h1m7 0h1m8 0h1m7 0h1m8 0h1m7 0h1m7 0h1m8 0h1m7 0h1m8 0h1m7 0h1m8 0h1m7 0h1m7 0h1m8 0h1m7 0h1m8 0h1m7 0h1m8 0h1m7 0h1M1 600.5h1m8 0h1m7 0h1m8 0h1m7 0h1m8 0h1m7 0h1m7 0h1m8 0h1m7 0h1m8 0h1m7 0h1m8 0h1m7 0h1m7 0h1m8 0h1m7 0h1m8 0h1m7 0h1m8 0h1m7 0h1m8 0h1m7 0h1m7 0h1m8 0h1m7 0h1m8 0h1m7 0h1m8 0h1m7 0h1m7 0h1m8 0h1m7 0h1m8 0h1m7 0h1m8 0h1m7 0h1m7 0h1m8 0h1m7 0h1m8 0h1m7 0h1m8 0h1m7 0h1m8 0h1m7 0h1m7 0h1m8 0h1m7 0h1m8 0h1m7 0h1m8 0h1m7 0h1m7 0h1m8 0h1m7 0h1m8 0h1m7 0h1m8 0h1m7 0h1m8 0h1m7 0h1m7 0h1m8 0h1m7 0h1m8 0h1m7 0h1m8 0h1m7 0h1m7 0h1m8 0h1m7 0h1m8 0h1m7 0h1m8 0h1m7 0h1m7 0h1m8 0h1m7 0h1m8 0h1m7 0h1m8 0h1m7 0h1m8 0h1m7 0h1m7 0h1m8 0h1m7 0h1m8 0h1m7 0h1m8 0h1m7 0h1m7 0h1m8 0h1m7 0h1m8 0h1m7 0h1m8 0h1m7 0h1m7 0h1m8 0h1m7 0h1m8 0h1m7 0h1m8 0h1m7 0h1M1 608.5h1m8 0h1m7 0h1m8 0h1m7 0h1m8 0h1m7 0h1m7 0h1m8 0h1m7 0h1m8 0h1m7 0h1m8 0h1m7 0h1m7 0h1m8 0h1m7 0h1m8 0h1m7 0h1m8 0h1m7 0h1m8 0h1m7 0h1m7 0h1m8 0h1m7 0h1m8 0h1m7 0h1m8 0h1m7 0h1m7 0h1m8 0h1m7 0h1m8 0h1m7 0h1m8 0h1m7 0h1m7 0h1m8 0h1m7 0h1m8 0h1m7 0h1m8 0h1m7 0h1m8 0h1m7 0h1m7 0h1m8 0h1m7 0h1m8 0h1m7 0h1m8 0h1m7 0h1m7 0h1m8 0h1m7 0h1m8 0h1m7 0h1m8 0h1m7 0h1m8 0h1m7 0h1m7 0h1m8 0h1m7 0h1m8 0h1m7 0h1m8 0h1m7 0h1m7 0h1m8 0h1m7 0h1m8 0h1m7 0h1m8 0h1m7 0h1m7 0h1m8 0h1m7 0h1m8 0h1m7 0h1m8 0h1m7 0h1m8 0h1m7 0h1m7 0h1m8 0h1m7 0h1m8 0h1m7 0h1m8 0h1m7 0h1m7 0h1m8 0h1m7 0h1m8 0h1m7 0h1m8 0h1m7 0h1m7 0h1m8 0h1m7 0h1m8 0h1m7 0h1m8 0h1m7 0h1M1 617.5h1m8 0h1m7 0h1m8 0h1m7 0h1m8 0h1m7 0h1m7 0h1m8 0h1m7 0h1m8 0h1m7 0h1m8 0h1m7 0h1m7 0h1m8 0h1m7 0h1m8 0h1m7 0h1m8 0h1m7 0h1m8 0h1m7 0h1m7 0h1m8 0h1m7 0h1m8 0h1m7 0h1m8 0h1m7 0h1m7 0h1m8 0h1m7 0h1m8 0h1m7 0h1m8 0h1m7 0h1m7 0h1m8 0h1m7 0h1m8 0h1m7 0h1m8 0h1m7 0h1m8 0h1m7 0h1m7 0h1m8 0h1m7 0h1m8 0h1m7 0h1m8 0h1m7 0h1m7 0h1m8 0h1m7 0h1m8 0h1m7 0h1m8 0h1m7 0h1m8 0h1m7 0h1m7 0h1m8 0h1m7 0h1m8 0h1m7 0h1m8 0h1m7 0h1m7 0h1m8 0h1m7 0h1m8 0h1m7 0h1m8 0h1m7 0h1m7 0h1m8 0h1m7 0h1m8 0h1m7 0h1m8 0h1m7 0h1m8 0h1m7 0h1m7 0h1m8 0h1m7 0h1m8 0h1m7 0h1m8 0h1m7 0h1m7 0h1m8 0h1m7 0h1m8 0h1m7 0h1m8 0h1m7 0h1m7 0h1m8 0h1m7 0h1m8 0h1m7 0h1m8 0h1m7 0h1M1 625.5h1m8 0h1m7 0h1m8 0h1m7 0h1m8 0h1m7 0h1m7 0h1m8 0h1m7 0h1m8 0h1m7 0h1m8 0h1m7 0h1m7 0h1m8 0h1m7 0h1m8 0h1m7 0h1m8 0h1m7 0h1m8 0h1m7 0h1m7 0h1m8 0h1m7 0h1m8 0h1m7 0h1m8 0h1m7 0h1m7 0h1m8 0h1m7 0h1m8 0h1m7 0h1m8 0h1m7 0h1m7 0h1m8 0h1m7 0h1m8 0h1m7 0h1m8 0h1m7 0h1m8 0h1m7 0h1m7 0h1m8 0h1m7 0h1m8 0h1m7 0h1m8 0h1m7 0h1m7 0h1m8 0h1m7 0h1m8 0h1m7 0h1m8 0h1m7 0h1m8 0h1m7 0h1m7 0h1m8 0h1m7 0h1m8 0h1m7 0h1m8 0h1m7 0h1m7 0h1m8 0h1m7 0h1m8 0h1m7 0h1m8 0h1m7 0h1m7 0h1m8 0h1m7 0h1m8 0h1m7 0h1m8 0h1m7 0h1m8 0h1m7 0h1m7 0h1m8 0h1m7 0h1m8 0h1m7 0h1m8 0h1m7 0h1m7 0h1m8 0h1m7 0h1m8 0h1m7 0h1m8 0h1m7 0h1m7 0h1m8 0h1m7 0h1m8 0h1m7 0h1m8 0h1m7 0h1M1 633.5h1m8 0h1m7 0h1m8 0h1m7 0h1m8 0h1m7 0h1m7 0h1m8 0h1m7 0h1m8 0h1m7 0h1m8 0h1m7 0h1m7 0h1m8 0h1m7 0h1m8 0h1m7 0h1m8 0h1m7 0h1m8 0h1m7 0h1m7 0h1m8 0h1m7 0h1m8 0h1m7 0h1m8 0h1m7 0h1m7 0h1m8 0h1m7 0h1m8 0h1m7 0h1m8 0h1m7 0h1m7 0h1m8 0h1m7 0h1m8 0h1m7 0h1m8 0h1m7 0h1m8 0h1m7 0h1m7 0h1m8 0h1m7 0h1m8 0h1m7 0h1m8 0h1m7 0h1m7 0h1m8 0h1m7 0h1m8 0h1m7 0h1m8 0h1m7 0h1m8 0h1m7 0h1m7 0h1m8 0h1m7 0h1m8 0h1m7 0h1m8 0h1m7 0h1m7 0h1m8 0h1m7 0h1m8 0h1m7 0h1m8 0h1m7 0h1m7 0h1m8 0h1m7 0h1m8 0h1m7 0h1m8 0h1m7 0h1m8 0h1m7 0h1m7 0h1m8 0h1m7 0h1m8 0h1m7 0h1m8 0h1m7 0h1m7 0h1m8 0h1m7 0h1m8 0h1m7 0h1m8 0h1m7 0h1m7 0h1m8 0h1m7 0h1m8 0h1m7 0h1m8 0h1m7 0h1" stroke="#666" stroke-width="1" fill="none" shape-rendering="crispEdges"/>
<g shape-rendering="crispEdges">
<rect x="12" y="0" width="1" height="642" fill="#808080"/>
<rect x="874" y="0" width="1" height="642" fill="#808080"/>
<rect x="0" y="3" width="892" height="1" fill="#7a7a7a"/>
<rect x="0" y="640" width="892" height="1" fill="#808080"/>
<rect x="0" y="93" width="12" height="1" fill="#808080"/>
<rect x="875" y="93" width="17" height="1" fill="#808080"/>
<rect x="0" y="183" width="12" height="1" fill="#808080"/>
<rect x="875" y="183" width="17" height="1" fill="#808080"/>
<rect x="0" y="273" width="12" height="1" fill="#808080"/>
<rect x="875" y="273" width="17" height="1" fill="#808080"/>
<rect x="0" y="363" width="12" height="1" fill="#808080"/>
<rect x="875" y="363" width="17" height="1" fill="#808080"/>
<rect x="0" y="453" width="12" height="1" fill="#808080"/>
<rect x="875" y="453" width="17" height="1" fill="#808080"/>
<rect x="0" y="543" width="12" height="1" fill="#808080"/>
<rect x="875" y="543" width="17" height="1" fill="#808080"/>
<rect x="0" y="633" width="12" height="1" fill="#808080"/>
<rect x="875" y="633" width="17" height="1" fill="#808080"/>
<rect x="102" y="1" width="1" height="3" fill="#808080"/>
<rect x="102" y="640" width="1" height="2" fill="#808080"/>
<rect x="192" y="1" width="1" height="3" fill="#808080"/>
<rect x="192" y="640" width="1" height="2" fill="#808080"/>
<rect x="282" y="1" width="1" height="3" fill="#808080"/>
<rect x="282" y="640" width="1" height="2" fill="#808080"/>
<rect x="372" y="1" width="1" height="3" fill="#808080"/>
<rect x="372" y="640" width="1" height="2" fill="#808080"/>
<rect x="462" y="1" width="1" height="3" fill="#808080"/>
<rect x="462" y="640" width="1" height="2" fill="#808080"/>
<rect x="552" y="1" width="1" height="3" fill="#808080"/>
<rect x="552" y="640" width="1" height="2" fill="#808080"/>
<rect x="642" y="1" width="1" height="3" fill="#808080"/>
<rect x="642" y="640" width="1" height="2" fill="#808080"/>
<rect x="732" y="1" width="1" height="3" fill="#808080"/>
<rect x="732" y="640" width="1" height="2" fill="#808080"/>
<rect x="822" y="1" width="1" height="3" fill="#808080"/>
<rect x="822" y="640" width="1" height="2" fill="#808080"/>
<rect x="0" y="0" width="892" height="1" fill="#a9a9a9"/>
<rect x="0" y="1" width="892" height="1" fill="#6a6a6a"/>
<rect x="0" y="2" width="892" height="1" fill="#ffffff"/>
<rect x="12" y="2" width="1" height="1" fill="#808080"/>
<rect x="102" y="2" width="1" height="1" fill="#808080"/>
<rect x="192" y="2" width="1" height="1" fill="#808080"/>
<rect x="282" y="2" width="1" height="1" fill="#808080"/>
<rect x="372" y="2" width="1" height="1" fill="#808080"/>
<rect x="462" y="2" width="1" height="1" fill="#808080"/>
<rect x="552" y="2" width="1" height="1" fill="#808080"/>
<rect x="642" y="2" width="1" height="1" fill="#808080"/>
<rect x="732" y="2" width="1" height="1" fill="#808080"/>
<rect x="822" y="2" width="1" height="1" fill="#808080"/>
<rect x="874" y="2" width="1" height="1" fill="#808080"/>
</g>
<text x="1.5" y="50.5" font-family="Liberation Sans" font-size="9" fill="#9a9a9a" text-anchor="middle" transform="rotate(-90 1.5 47.5)">A</text>
<text x="883" y="50" font-family="Liberation Sans" font-size="9" fill="#a8a8a8" text-anchor="middle">A</text>
<text x="1.5" y="140.5" font-family="Liberation Sans" font-size="9" fill="#9a9a9a" text-anchor="middle" transform="rotate(-90 1.5 137.5)">B</text>
<text x="883" y="140" font-family="Liberation Sans" font-size="9" fill="#a8a8a8" text-anchor="middle">B</text>
<text x="1.5" y="230.5" font-family="Liberation Sans" font-size="9" fill="#9a9a9a" text-anchor="middle" transform="rotate(-90 1.5 227.5)">C</text>
<text x="883" y="230" font-family="Liberation Sans" font-size="9" fill="#a8a8a8" text-anchor="middle">C</text>
<text x="1.5" y="320.5" font-family="Liberation Sans" font-size="9" fill="#9a9a9a" text-anchor="middle" transform="rotate(-90 1.5 317.5)">D</text>
<text x="883" y="320" font-family="Liberation Sans" font-size="9" fill="#a8a8a8" text-anchor="middle">D</text>
<text x="1.5" y="410.5" font-family="Liberation Sans" font-size="9" fill="#9a9a9a" text-anchor="middle" transform="rotate(-90 1.5 407.5)">E</text>
<text x="883" y="410" font-family="Liberation Sans" font-size="9" fill="#a8a8a8" text-anchor="middle">E</text>
<text x="1.5" y="500.5" font-family="Liberation Sans" font-size="9" fill="#9a9a9a" text-anchor="middle" transform="rotate(-90 1.5 497.5)">F</text>
<text x="883" y="500" font-family="Liberation Sans" font-size="9" fill="#a8a8a8" text-anchor="middle">F</text>
<text x="1.5" y="590.5" font-family="Liberation Sans" font-size="9" fill="#9a9a9a" text-anchor="middle" transform="rotate(-90 1.5 587.5)">G</text>
<text x="883" y="590" font-family="Liberation Sans" font-size="9" fill="#a8a8a8" text-anchor="middle">G</text>
<g shape-rendering="crispEdges">
<rect x="69" y="212" width="1" height="9" fill="#000000"/>
<rect x="69" y="253" width="1" height="10" fill="#000000"/>
<rect x="69" y="212" width="212" height="1" fill="#ff0000"/>
<rect x="280" y="212" width="1" height="18" fill="#ff0000"/>
<rect x="69" y="262" width="1" height="27" fill="#ff0000"/>
<rect x="69" y="288" width="212" height="1" fill="#ff0000"/>
<rect x="280" y="262" width="1" height="27" fill="#ff0000"/>
<rect x="280" y="229" width="26" height="1" fill="#000000"/>
<rect x="280" y="262" width="24" height="1" fill="#000000"/>
<rect x="322" y="229" width="26" height="1" fill="#000000"/>
<rect x="324" y="246" width="24" height="1" fill="#000000"/>
<rect x="324" y="262" width="24" height="1" fill="#000000"/>
<rect x="347" y="187" width="1" height="43" fill="#ff0000"/>
<rect x="347" y="187" width="103" height="1" fill="#ff0000"/>
<rect x="449" y="187" width="1" height="17" fill="#0000ff"/>
<rect x="347" y="246" width="1" height="9" fill="#ff0000"/>
<rect x="347" y="254" width="69" height="1" fill="#ff0000"/>
<rect x="415" y="254" width="1" height="364" fill="#ff0000"/>
<rect x="347" y="262" width="1" height="10" fill="#ff0000"/>
<rect x="347" y="271" width="103" height="1" fill="#ff0000"/>
<rect x="449" y="254" width="1" height="18" fill="#0000ff"/>
<rect x="407" y="229" width="17" height="1" fill="#0000ff"/>
<rect x="407" y="229" width="1" height="127" fill="#ff0000"/>
<rect x="407" y="355" width="51" height="1" fill="#ff0000"/>
<rect x="457" y="355" width="1" height="10" fill="#ff0000"/>
<rect x="457" y="364" width="1" height="10" fill="#000000"/>
<rect x="457" y="373" width="1" height="8" fill="#ff0000"/>
<rect x="457" y="387" width="1" height="10" fill="#ff0000"/>
<rect x="457" y="396" width="1" height="12" fill="#000000"/>
<rect x="457" y="407" width="1" height="118" fill="#ff0000"/>
<rect x="457" y="524" width="95" height="1" fill="#ff0000"/>
<rect x="551" y="524" width="17" height="1" fill="#0000ff"/>
<rect x="474" y="229" width="15" height="1" fill="#0000ff"/>
<rect x="488" y="229" width="54" height="1" fill="#ff0000"/>
<rect x="541" y="229" width="18" height="1" fill="#0000ff"/>
<rect x="482" y="220" width="1" height="128" fill="#ff0000"/>
<rect x="482" y="220" width="44" height="1" fill="#ff0000"/>
<rect x="525" y="152" width="1" height="69" fill="#ff0000"/>
<rect x="499" y="68" width="1" height="170" fill="#ff0000"/>
<rect x="499" y="237" width="18" height="1" fill="#ff0000"/>
<rect x="516" y="237" width="1" height="19" fill="#ff0000"/>
<rect x="516" y="255" width="1" height="42" fill="#000000"/>
<rect x="516" y="296" width="1" height="313" fill="#ff0000"/>
<rect x="499" y="608" width="18" height="1" fill="#ff0000"/>
<rect x="499" y="608" width="1" height="10" fill="#ff0000"/>
<rect x="525" y="229" width="1" height="153" fill="#ff0000"/>
<rect x="525" y="381" width="26" height="1" fill="#ff0000"/>
<rect x="550" y="381" width="18" height="1" fill="#0000ff"/>
<rect x="499" y="68" width="36" height="1" fill="#ff0000"/>
<rect x="534" y="68" width="17" height="1" fill="#0000ff"/>
<rect x="525" y="68" width="1" height="44" fill="#ff0000"/>
<rect x="525" y="111" width="1" height="42" fill="#000000"/>
<rect x="601" y="68" width="17" height="1" fill="#0000ff"/>
<rect x="617" y="68" width="221" height="1" fill="#ff0000"/>
<rect x="837" y="55" width="1" height="14" fill="#000000"/>
<rect x="575" y="93" width="1" height="19" fill="#0000ff"/>
<rect x="575" y="111" width="1" height="17" fill="#ff0000"/>
<rect x="567" y="127" width="9" height="1" fill="#ff0000"/>
<rect x="567" y="127" width="1" height="27" fill="#ff0000"/>
<rect x="541" y="153" width="27" height="1" fill="#ff0000"/>
<rect x="541" y="153" width="1" height="9" fill="#ff0000"/>
<rect x="541" y="161" width="19" height="1" fill="#000000"/>
<rect x="575" y="127" width="10" height="1" fill="#ff0000"/>
<rect x="584" y="127" width="1" height="10" fill="#ff0000"/>
<rect x="584" y="136" width="60" height="1" fill="#ff0000"/>
<rect x="643" y="68" width="1" height="28" fill="#ff0000"/>
<rect x="643" y="95" width="1" height="9" fill="#000000"/>
<path d="M643.50 103.50L647.50 105.15M647.50 105.15L639.00 108.85M639.00 108.85L647.50 113.42M647.50 113.42L639.00 117.90M639.00 117.90L647.50 121.79M647.50 121.79L639.00 125.58M639.00 125.58L643.50 128.50" stroke="#000000" stroke-width="1" fill="none" shape-rendering="crispEdges"/>
<rect x="643" y="128" width="1" height="9" fill="#000000"/>
<rect x="575" y="136" width="1" height="19" fill="#000000"/>
<path d="M575.50 154.50L579.50 156.09M579.50 156.09L571.00 159.64M571.00 159.64L579.50 164.03M579.50 164.03L571.00 168.32M571.00 168.32L579.50 172.06M579.50 172.06L571.00 175.70M571.00 175.70L575.50 178.50" stroke="#000000" stroke-width="1" fill="none" shape-rendering="crispEdges"/>
<rect x="575" y="178" width="1" height="19" fill="#000000"/>
<rect x="575" y="196" width="1" height="8" fill="#ff0000"/>
<rect x="525" y="203" width="271" height="1" fill="#ff0000"/>
<rect x="795" y="170" width="1" height="34" fill="#ff0000"/>
<rect x="795" y="68" width="1" height="11" fill="#ff0000"/>
<rect x="795" y="78" width="1" height="9" fill="#000000"/>
<path d="M795.50 86.50L799.50 88.15M799.50 88.15L791.00 91.85M791.00 91.85L799.50 96.42M799.50 96.42L791.00 100.90M791.00 100.90L799.50 104.79M799.50 104.79L791.00 108.58M791.00 108.58L795.50 111.50" stroke="#000000" stroke-width="1" fill="none" shape-rendering="crispEdges"/>
<rect x="795" y="111" width="1" height="9" fill="#000000"/>
<rect x="853" y="55" width="1" height="15" fill="#000000"/>
<rect x="853" y="69" width="1" height="27" fill="#ff0000"/>
<rect x="626" y="229" width="18" height="1" fill="#0000ff"/>
<rect x="643" y="229" width="195" height="1" fill="#ff0000"/>
<rect x="837" y="215" width="1" height="15" fill="#000000"/>
<rect x="853" y="215" width="1" height="15" fill="#000000"/>
<rect x="676" y="229" width="1" height="17" fill="#ff0000"/>
<rect x="676" y="245" width="1" height="44" fill="#000000"/>
<rect x="676" y="288" width="1" height="43" fill="#ff0000"/>
<rect x="592" y="254" width="1" height="18" fill="#0000ff"/>
<rect x="592" y="271" width="1" height="60" fill="#ff0000"/>
<rect x="592" y="330" width="136" height="1" fill="#ff0000"/>
<rect x="727" y="330" width="1" height="18" fill="#ff0000"/>
<rect x="778" y="229" width="1" height="27" fill="#ff0000"/>
<rect x="778" y="255" width="1" height="9" fill="#000000"/>
<path d="M778.50 263.50L782.50 265.15M782.50 265.15L774.00 268.85M774.00 268.85L782.50 273.42M782.50 273.42L774.00 277.90M774.00 277.90L782.50 281.79M782.50 281.79L774.00 285.58M774.00 285.58L778.50 288.50" stroke="#000000" stroke-width="1" fill="none" shape-rendering="crispEdges"/>
<rect x="778" y="288" width="1" height="9" fill="#000000"/>
<rect x="415" y="347" width="364" height="1" fill="#ff0000"/>
<rect x="634" y="381" width="18" height="1" fill="#0000ff"/>
<rect x="651" y="381" width="178" height="1" fill="#ff0000"/>
<rect x="828" y="366" width="1" height="16" fill="#000000"/>
<rect x="845" y="366" width="1" height="17" fill="#000000"/>
<rect x="660" y="381" width="1" height="43" fill="#000000"/>
<rect x="660" y="423" width="1" height="195" fill="#ff0000"/>
<rect x="769" y="381" width="1" height="18" fill="#ff0000"/>
<rect x="769" y="398" width="1" height="9" fill="#000000"/>
<path d="M769.50 406.50L773.50 408.15M773.50 408.15L765.00 411.85M765.00 411.85L773.50 416.42M773.50 416.42L765.00 420.90M765.00 420.90L773.50 424.79M773.50 424.79L765.00 428.58M765.00 428.58L769.50 431.50" stroke="#000000" stroke-width="1" fill="none" shape-rendering="crispEdges"/>
<rect x="769" y="431" width="1" height="9" fill="#000000"/>
<rect x="769" y="490" width="1" height="128" fill="#ff0000"/>
<rect x="601" y="406" width="1" height="17" fill="#0000ff"/>
<rect x="601" y="422" width="1" height="86" fill="#ff0000"/>
<rect x="449" y="507" width="153" height="1" fill="#ff0000"/>
<rect x="449" y="507" width="1" height="111" fill="#ff0000"/>
<rect x="601" y="549" width="1" height="17" fill="#0000ff"/>
<rect x="601" y="565" width="1" height="53" fill="#ff0000"/>
<rect x="634" y="524" width="17" height="1" fill="#0000ff"/>
<rect x="650" y="524" width="196" height="1" fill="#ff0000"/>
<rect x="845" y="516" width="1" height="9" fill="#ff0000"/>
<rect x="845" y="501" width="1" height="16" fill="#000000"/>
<rect x="862" y="501" width="1" height="16" fill="#000000"/>
<rect x="862" y="516" width="1" height="35" fill="#ff0000"/>
<rect x="676" y="524" width="1" height="10" fill="#ff0000"/>
<rect x="676" y="533" width="1" height="42" fill="#000000"/>
<rect x="676" y="574" width="1" height="44" fill="#ff0000"/>
<rect x="786" y="524" width="1" height="27" fill="#ff0000"/>
<rect x="786" y="550" width="1" height="9" fill="#000000"/>
<path d="M786.50 558.50L790.50 560.15M790.50 560.15L782.00 563.85M782.00 563.85L790.50 568.42M790.50 568.42L782.00 572.90M782.00 572.90L790.50 576.79M790.50 576.79L782.00 580.58M782.00 580.58L786.50 583.50" stroke="#000000" stroke-width="1" fill="none" shape-rendering="crispEdges"/>
<rect x="786" y="583" width="1" height="9" fill="#000000"/>
<rect x="786" y="592" width="18" height="1" fill="#ff0000"/>
<rect x="803" y="583" width="1" height="10" fill="#ff0000"/>
<rect x="803" y="583" width="26" height="1" fill="#ff0000"/>
<rect x="803" y="634" width="26" height="1" fill="#ff0000"/>
<rect x="803" y="617" width="1" height="18" fill="#ff0000"/>
<rect x="415" y="617" width="389" height="1" fill="#ff0000"/>
</g>
<rect x="795" y="119" width="1" height="20" fill="#008000"/>
<path d="M788.0 138 L804.0 138 L795.8 149 Z" fill="#008000" stroke="#008000" stroke-width="0.8"/>
<rect x="789" y="150" width="15" height="1" fill="#008000"/>
<rect x="795" y="149" width="1" height="22" fill="#008000"/>
<path d="M803.0 146.3 L810.0 142.2" stroke="#008000" stroke-width="1.3"/>
<path d="M811.0 141.6 l-3.8 0.6 l2 2.8 Z" fill="#008000"/>
<path d="M805.5 149.0 L812.5 144.9" stroke="#008000" stroke-width="1.3"/>
<path d="M813.5 144.3 l-3.8 0.6 l2 2.8 Z" fill="#008000"/>
<rect x="778" y="296" width="1" height="20" fill="#008000"/>
<path d="M771.0 315 L787.0 315 L778.8 326 Z" fill="#008000" stroke="#008000" stroke-width="0.8"/>
<rect x="772" y="327" width="15" height="1" fill="#008000"/>
<rect x="778" y="326" width="1" height="22" fill="#008000"/>
<path d="M786.0 323.3 L793.0 319.2" stroke="#008000" stroke-width="1.3"/>
<path d="M794.0 318.6 l-3.8 0.6 l2 2.8 Z" fill="#008000"/>
<path d="M788.5 326.0 L795.5 321.9" stroke="#008000" stroke-width="1.3"/>
<path d="M796.5 321.3 l-3.8 0.6 l2 2.8 Z" fill="#008000"/>
<rect x="769" y="440" width="1" height="20" fill="#008000"/>
<path d="M762.0 459 L778.0 459 L769.8 470 Z" fill="#008000" stroke="#008000" stroke-width="0.8"/>
<rect x="763" y="471" width="15" height="1" fill="#008000"/>
<rect x="769" y="470" width="1" height="22" fill="#008000"/>
<path d="M777.0 467.3 L784.0 463.2" stroke="#008000" stroke-width="1.3"/>
<path d="M785.0 462.6 l-3.8 0.6 l2 2.8 Z" fill="#008000"/>
<path d="M779.5 470.0 L786.5 465.9" stroke="#008000" stroke-width="1.3"/>
<path d="M787.5 465.3 l-3.8 0.6 l2 2.8 Z" fill="#008000"/>
<rect x="828" y="583" width="1" height="20" fill="#008000"/>
<path d="M821.0 602 L837.0 602 L828.8 613 Z" fill="#008000" stroke="#008000" stroke-width="0.8"/>
<rect x="822" y="614" width="15" height="1" fill="#008000"/>
<rect x="828" y="613" width="1" height="22" fill="#008000"/>
<path d="M836.0 610.3 L843.0 606.2" stroke="#008000" stroke-width="1.3"/>
<path d="M844.0 605.6 l-3.8 0.6 l2 2.8 Z" fill="#008000"/>
<path d="M838.5 613.0 L845.5 608.9" stroke="#008000" stroke-width="1.3"/>
<path d="M846.5 608.3 l-3.8 0.6 l2 2.8 Z" fill="#008000"/>
<rect x="508" y="272" width="18" height="2" fill="#000000"/>
<path d="M508.0 281.5 Q509.5 279 512.5 279 L520.5 279 Q523.5 279 525.0 281.5" stroke="#000000" stroke-width="2" fill="none"/>
<path d="M507.5 266.5 H513.5 M510.5 263.5 V269.5" stroke="#ff0000" stroke-width="1.2"/>
<rect x="668" y="263" width="18" height="2" fill="#000000"/>
<path d="M668.0 273.5 Q669.5 271 672.5 271 L680.5 271 Q683.5 271 685.0 273.5" stroke="#000000" stroke-width="2" fill="none"/>
<path d="M668 258.5 H674 M671 255.5 V261.5" stroke="#ff0000" stroke-width="1.2"/>
<rect x="652" y="398" width="18" height="2" fill="#000000"/>
<path d="M652.0 408.5 Q653.5 406 656.5 406 L664.5 406 Q667.5 406 669.0 408.5" stroke="#000000" stroke-width="2" fill="none"/>
<path d="M651 393.5 H657 M654 390.5 V396.5" stroke="#ff0000" stroke-width="1.2"/>
<rect x="668" y="555" width="18" height="2" fill="#000000"/>
<path d="M668.0 546.5 Q669.5 549 672.5 549 L680.5 549 Q683.5 549 685.0 546.5" stroke="#000000" stroke-width="2" fill="none"/>
<path d="M680 563 H686 M683 560 V566" stroke="#ff0000" stroke-width="1.2"/>
<rect x="449" y="386" width="18" height="2" fill="#ff0000"/>
<path d="M449.0 377.5 Q450.5 380 453.5 380 L461.5 380 Q464.5 380 466.0 377.5" stroke="#ff0000" stroke-width="2" fill="none"/>
<rect x="516" y="127" width="18" height="2" fill="#000"/><rect x="516" y="133" width="18" height="2" fill="#000"/>
<rect x="853" y="95" width="1" height="8" fill="#000000"/>
<rect x="845" y="102" width="17" height="1.6" fill="#000000"/>
<rect x="848" y="105" width="11" height="1.5" fill="#000000"/>
<rect x="850.5" y="108" width="6" height="1.5" fill="#000000"/>
<rect x="853" y="229" width="1" height="8" fill="#000000"/>
<rect x="845" y="236" width="17" height="1.6" fill="#000000"/>
<rect x="848" y="239" width="11" height="1.5" fill="#000000"/>
<rect x="850.5" y="242" width="6" height="1.5" fill="#000000"/>
<rect x="845" y="382" width="1" height="8" fill="#000000"/>
<rect x="837" y="389" width="17" height="1.6" fill="#000000"/>
<rect x="840" y="392" width="11" height="1.5" fill="#000000"/>
<rect x="842.5" y="395" width="6" height="1.5" fill="#000000"/>
<rect x="862" y="551" width="1" height="8" fill="#000000"/>
<rect x="854" y="558" width="17" height="1.6" fill="#000000"/>
<rect x="857" y="561" width="11" height="1.5" fill="#000000"/>
<rect x="859.5" y="564" width="6" height="1.5" fill="#000000"/>
<rect x="432" y="618" width="1" height="8" fill="#000000"/>
<rect x="424" y="625" width="17" height="1.6" fill="#000000"/>
<rect x="427" y="628" width="11" height="1.5" fill="#000000"/>
<rect x="429.5" y="631" width="6" height="1.5" fill="#000000"/>
<rect x="432" y="617" width="1" height="9" fill="#000000"/>
<rect x="828.75" y="24.75" width="33" height="35" fill="#c8e0c8" stroke="#000" stroke-width="1.4"/>
<rect x="832" y="27" width="26.5" height="12.5" fill="#c0c0c0" stroke="#f4f4f4" stroke-width="1"/>
<path d="M835 39.5 C837 36 842 36 845 36 C849 36 853 36 854.5 39.5" stroke="#000" stroke-width="1" fill="none"/>
<path d="M844 40 L851 29.5" stroke="#000" stroke-width="1" fill="none"/>
<path d="M834.5 46.5 H840.5 M837.5 43.5 V49.5" stroke="#000000" stroke-width="1.1"/>
<path d="M850.5 46.5 H856.5" stroke="#000" stroke-width="1.1"/>
<circle cx="837.5" cy="54.5" r="2.2" fill="#8f9a8f" stroke="#000" stroke-width="1"/>
<circle cx="853.5" cy="54.5" r="2.2" fill="#8f9a8f" stroke="#000" stroke-width="1"/>
<text x="830" y="17" font-family="Liberation Serif" font-size="11.5" font-weight="bold" fill="#111" text-anchor="start" textLength="29" lengthAdjust="spacingAndGlyphs">XMM3</text>
<rect x="828.75" y="184.75" width="33" height="35" fill="#c8e0c8" stroke="#000" stroke-width="1.4"/>
<rect x="832" y="187" width="26.5" height="12.5" fill="#c0c0c0" stroke="#f4f4f4" stroke-width="1"/>
<path d="M835 199.5 C837 196 842 196 845 196 C849 196 853 196 854.5 199.5" stroke="#000" stroke-width="1" fill="none"/>
<path d="M844 200 L851 189.5" stroke="#000" stroke-width="1" fill="none"/>
<path d="M834.5 206.5 H840.5 M837.5 203.5 V209.5" stroke="#000000" stroke-width="1.1"/>
<path d="M850.5 206.5 H856.5" stroke="#000" stroke-width="1.1"/>
<circle cx="837.5" cy="214.5" r="2.2" fill="#8f9a8f" stroke="#000" stroke-width="1"/>
<circle cx="853.5" cy="214.5" r="2.2" fill="#8f9a8f" stroke="#000" stroke-width="1"/>
<text x="829.5" y="177" font-family="Liberation Serif" font-size="11.5" font-weight="bold" fill="#111" text-anchor="start" textLength="29" lengthAdjust="spacingAndGlyphs">XMM1</text>
<rect x="820.75" y="336.75" width="33" height="35" fill="#c8e0c8" stroke="#000" stroke-width="1.4"/>
<rect x="824" y="339" width="26.5" height="12.5" fill="#c0c0c0" stroke="#f4f4f4" stroke-width="1"/>
<path d="M827 351.5 C829 348 834 348 837 348 C841 348 845 348 846.5 351.5" stroke="#000" stroke-width="1" fill="none"/>
<path d="M836 352 L843 341.5" stroke="#000" stroke-width="1" fill="none"/>
<path d="M825.5 358.5 H831.5 M828.5 355.5 V361.5" stroke="#000000" stroke-width="1.1"/>
<path d="M842.5 358.5 H848.5" stroke="#000" stroke-width="1.1"/>
<circle cx="828.5" cy="366.5" r="2.2" fill="#8f9a8f" stroke="#000" stroke-width="1"/>
<circle cx="845.5" cy="366.5" r="2.2" fill="#8f9a8f" stroke="#000" stroke-width="1"/>
<text x="821.5" y="329" font-family="Liberation Serif" font-size="11.5" font-weight="bold" fill="#111" text-anchor="start" textLength="29" lengthAdjust="spacingAndGlyphs">XMM2</text>
<rect x="837.75" y="471.75" width="33" height="35" fill="#c8e0c8" stroke="#000" stroke-width="1.4"/>
<rect x="841" y="474" width="26.5" height="12.5" fill="#c0c0c0" stroke="#f4f4f4" stroke-width="1"/>
<path d="M844 486.5 C846 483 851 483 854 483 C858 483 862 483 863.5 486.5" stroke="#000" stroke-width="1" fill="none"/>
<path d="M853 487 L860 476.5" stroke="#000" stroke-width="1" fill="none"/>
<path d="M842.5 493.5 H848.5 M845.5 490.5 V496.5" stroke="#000000" stroke-width="1.1"/>
<path d="M859.5 493.5 H865.5" stroke="#000" stroke-width="1.1"/>
<circle cx="845.5" cy="501.5" r="2.2" fill="#8f9a8f" stroke="#000" stroke-width="1"/>
<circle cx="862.5" cy="501.5" r="2.2" fill="#8f9a8f" stroke="#000" stroke-width="1"/>
<text x="839" y="464" font-family="Liberation Serif" font-size="11.5" font-weight="bold" fill="#111" text-anchor="start" textLength="29" lengthAdjust="spacingAndGlyphs">XMM4</text>
<rect x="550.5" y="52.5" width="50" height="41" fill="none" stroke="#0000ff"/>
<text x="576" y="60" font-family="Liberation Sans" font-size="7" font-weight="bold" fill="#0000ff" text-anchor="middle" >VREG</text>
<text x="553" y="71" font-family="Liberation Mono" font-size="8" font-weight="normal" fill="#6f7cff" text-anchor="start" >IN</text>
<text x="581" y="71" font-family="Liberation Mono" font-size="8" font-weight="normal" fill="#6f7cff" text-anchor="start" >OUT</text>
<text x="567" y="88" font-family="Liberation Mono" font-size="8" font-weight="normal" fill="#6f7cff" text-anchor="start" >ADJ</text>
<text x="533" y="66" font-family="Liberation Sans" font-size="8" font-weight="normal" fill="#6f7cff" text-anchor="start" >3</text>
<text x="605" y="66" font-family="Liberation Sans" font-size="8" font-weight="normal" fill="#6f7cff" text-anchor="start" >2</text>
<text x="578" y="105" font-family="Liberation Sans" font-size="8" font-weight="normal" fill="#6f7cff" text-anchor="start" >1</text>
<rect x="558.5" y="220.5" width="68" height="34" fill="none" stroke="#0000ff" stroke-width="1"/>
<text x="561.5" y="231" font-family="Liberation Mono" font-size="8.3" font-weight="normal" fill="#6f7cff" text-anchor="start" >LINE</text>
<text x="561.5" y="238.5" font-family="Liberation Mono" font-size="8.3" font-weight="normal" fill="#6f7cff" text-anchor="start" >VOLTAGE</text>
<text x="624" y="231" font-family="Liberation Mono" font-size="8.3" font-weight="normal" fill="#6f7cff" text-anchor="end" >VREG</text>
<text x="578" y="252.5" font-family="Liberation Mono" font-size="8.3" font-weight="normal" fill="#6f7cff" text-anchor="start" >COMMON</text>
<rect x="567.5" y="372.5" width="67" height="34" fill="none" stroke="#0000ff" stroke-width="1"/>
<text x="570.5" y="383" font-family="Liberation Mono" font-size="8.3" font-weight="normal" fill="#6f7cff" text-anchor="start" >LINE</text>
<text x="570.5" y="390.5" font-family="Liberation Mono" font-size="8.3" font-weight="normal" fill="#6f7cff" text-anchor="start" >VOLTAGE</text>
<text x="632" y="383" font-family="Liberation Mono" font-size="8.3" font-weight="normal" fill="#6f7cff" text-anchor="end" >VREG</text>
<text x="587" y="404.5" font-family="Liberation Mono" font-size="8.3" font-weight="normal" fill="#6f7cff" text-anchor="start" >COMMON</text>
<rect x="567.5" y="516.5" width="67" height="33" fill="none" stroke="#0000ff" stroke-width="1"/>
<text x="570.5" y="527" font-family="Liberation Mono" font-size="8.3" font-weight="normal" fill="#6f7cff" text-anchor="start" >LINE</text>
<text x="570.5" y="534.5" font-family="Liberation Mono" font-size="8.3" font-weight="normal" fill="#6f7cff" text-anchor="start" >VOLTAGE</text>
<text x="632" y="527" font-family="Liberation Mono" font-size="8.3" font-weight="normal" fill="#6f7cff" text-anchor="end" >VREG</text>
<text x="587" y="547.5" font-family="Liberation Mono" font-size="8.3" font-weight="normal" fill="#6f7cff" text-anchor="start" >COMMON</text>
<circle cx="69.5" cy="236.5" r="16.3" fill="none" stroke="#000" stroke-width="1"/>
<path d="M66.5 226.5 H72.5 M69.5 223.5 V229.5" stroke="#000000" stroke-width="1.1"/>
<path d="M66.5 248.5 H72.5" stroke="#000" stroke-width="1.1"/>
<path d="M64.5 238 Q67 234 69.5 236.5 Q72 239.5 74.5 235.5" stroke="#000" stroke-width="1" fill="none"/>
<path d="M305 229.5 C309 230.0 309 235.6 303 236.1 C309 236.6 309 242.2 303 242.7 C309 243.2 309 248.79999999999998 303 249.3 C309 249.8 309 255.4 303 255.9 C309 256.4 309 262.0 303 262.5" stroke="#000" stroke-width="1.1" fill="none"/>
<path d="M323 229.5 C318 230.0 318 235.6 324 236.1 C318 236.6 318 242.2 324 242.7 C318 243.2 318 248.79999999999998 324 249.3 C318 249.8 318 255.4 324 255.9 C318 256.4 318 262.0 324 262.5" stroke="#000" stroke-width="1.1" fill="none"/>
<rect x="311.0" y="229" width="1" height="34" fill="#000"/>
<rect x="314.0" y="229" width="1" height="34" fill="#000"/>
<rect x="316.0" y="229" width="1" height="34" fill="#000"/>
<rect x="300" y="225" width="1" height="2" fill="#000"/><rect x="327" y="225" width="1" height="2" fill="#000"/>
<path d="M449.5 203.5 L474.5 229.5 L449.5 254.5 L424 229.5 Z" stroke="#0000ff" stroke-width="1.1" fill="none"/>
<path d="M437.04 224.49 L428.76 216.37 L439.55 213.64 Z" fill="#0000ff" stroke="#0000ff" stroke-width="0.6"/>
<path d="M443.69 217.71 L435.41 209.58" stroke="#0000ff" stroke-width="1.1"/>
<path d="M454.01 216.56 L462.37 208.52 L464.77 219.38 Z" fill="#0000ff" stroke="#0000ff" stroke-width="0.6"/>
<path d="M460.59 223.40 L468.95 215.36" stroke="#0000ff" stroke-width="1.1"/>
<path d="M428.76 242.29 L436.88 234.01 L439.61 244.80 Z" fill="#0000ff" stroke="#0000ff" stroke-width="0.6"/>
<path d="M435.55 248.94 L443.67 240.66" stroke="#0000ff" stroke-width="1.1"/>
<path d="M462.21 249.99 L454.01 241.79 L464.83 239.17 Z" fill="#0000ff" stroke="#0000ff" stroke-width="0.6"/>
<path d="M468.93 243.27 L460.73 235.07" stroke="#0000ff" stroke-width="1.1"/>
<path d="M559.5 161.5 L570 167" stroke="#000" stroke-width="1.1"/>
<path d="M572.5 168.5 L565 168.5 L568.5 162.5 Z" fill="#000"/>
<circle cx="525.5" cy="68.5" r="1.8" fill="#ff0000"/>
<circle cx="643.5" cy="68.5" r="1.8" fill="#ff0000"/>
<circle cx="795.5" cy="68.5" r="1.8" fill="#ff0000"/>
<circle cx="575.5" cy="127.5" r="1.8" fill="#ff0000"/>
<circle cx="525.5" cy="203.5" r="1.8" fill="#ff0000"/>
<circle cx="575.5" cy="203.5" r="1.8" fill="#ff0000"/>
<circle cx="491.5" cy="229.5" r="1.8" fill="#ff0000"/>
<circle cx="499.5" cy="229.5" r="1.8" fill="#ff0000"/>
<circle cx="525.5" cy="229.5" r="1.8" fill="#ff0000"/>
<circle cx="676.5" cy="229.5" r="1.8" fill="#ff0000"/>
<circle cx="778.5" cy="229.5" r="1.8" fill="#ff0000"/>
<circle cx="676.5" cy="330.5" r="1.8" fill="#ff0000"/>
<circle cx="415.5" cy="347.5" r="1.8" fill="#ff0000"/>
<circle cx="482.5" cy="347.5" r="1.8" fill="#ff0000"/>
<circle cx="727.5" cy="347.5" r="1.8" fill="#ff0000"/>
<circle cx="660.5" cy="381.5" r="1.8" fill="#ff0000"/>
<circle cx="769.5" cy="381.5" r="1.8" fill="#ff0000"/>
<circle cx="676.5" cy="524.5" r="1.8" fill="#ff0000"/>
<circle cx="786.5" cy="524.5" r="1.8" fill="#ff0000"/>
<circle cx="432.5" cy="617.5" r="1.8" fill="#ff0000"/>
<circle cx="449.5" cy="617.5" r="1.8" fill="#ff0000"/>
<circle cx="499.5" cy="617.5" r="1.8" fill="#ff0000"/>
<circle cx="601.5" cy="617.5" r="1.8" fill="#ff0000"/>
<circle cx="660.5" cy="617.5" r="1.8" fill="#ff0000"/>
<circle cx="676.5" cy="617.5" r="1.8" fill="#ff0000"/>
<circle cx="769.5" cy="617.5" r="1.8" fill="#ff0000"/>
<text x="88" y="211.8" font-family="Liberation Sans" font-size="12" font-weight="bold" fill="#000000" text-anchor="start" >V1</text>
<text x="88" y="228.8" font-family="Liberation Sans" font-size="12" font-weight="bold" fill="#000000" text-anchor="start" >220Vpk</text>
<text x="88" y="241.8" font-family="Liberation Sans" font-size="12" font-weight="bold" fill="#000000" text-anchor="start" >60Hz</text>
<text x="88" y="255.8" font-family="Liberation Sans" font-size="12" font-weight="bold" fill="#000000" text-anchor="start" >0°</text>
<text x="305" y="218.8" font-family="Liberation Sans" font-size="12" font-weight="bold" fill="#000000" text-anchor="start" >U6</text>
<text x="305" y="275.8" font-family="Liberation Sans" font-size="12" font-weight="bold" fill="#000000" text-anchor="start" >12</text>
<text x="499" y="161.8" font-family="Liberation Sans" font-size="12" font-weight="bold" fill="#000000" text-anchor="start" >C10</text>
<text x="494" y="176.8" font-family="Liberation Sans" font-size="12" font-weight="bold" fill="#000000" text-anchor="start" >0.1uF</text>
<text x="651" y="102.8" font-family="Liberation Sans" font-size="12" font-weight="bold" fill="#000000" text-anchor="start" >R6</text>
<text x="651" y="120.8" font-family="Liberation Sans" font-size="12" font-weight="bold" fill="#000000" text-anchor="start" >470Ω</text>
<text x="583" y="146.8" font-family="Liberation Sans" font-size="12" font-weight="bold" fill="#000000" text-anchor="start" >R5</text>
<text x="583" y="164.8" font-family="Liberation Sans" font-size="12" font-weight="bold" fill="#000000" text-anchor="start" >Key = A</text>
<text x="583" y="178.8" font-family="Liberation Sans" font-size="12" font-weight="bold" fill="#000000" text-anchor="start" >5kΩ</text>
<text x="802" y="86.8" font-family="Liberation Sans" font-size="12" font-weight="bold" fill="#000000" text-anchor="start" >R3</text>
<text x="802" y="102.8" font-family="Liberation Sans" font-size="12" font-weight="bold" fill="#000000" text-anchor="start" >470Ω</text>
<text x="490" y="253.8" font-family="Liberation Sans" font-size="12" font-weight="bold" fill="#000000" text-anchor="start" >C6</text>
<text x="461" y="281.8" font-family="Liberation Sans" font-size="12" font-weight="bold" fill="#000000" text-anchor="start" >2200uF</text>
<text x="650" y="288.8" font-family="Liberation Sans" font-size="12" font-weight="bold" fill="#000000" text-anchor="start" >C7</text>
<text x="637" y="303.8" font-family="Liberation Sans" font-size="12" font-weight="bold" fill="#000000" text-anchor="start" >10uF</text>
<text x="786" y="262.8" font-family="Liberation Sans" font-size="12" font-weight="bold" fill="#000000" text-anchor="start" >R1</text>
<text x="786" y="279.8" font-family="Liberation Sans" font-size="12" font-weight="bold" fill="#000000" text-anchor="start" >470Ω</text>
<text x="468" y="357.8" font-family="Liberation Sans" font-size="12" font-weight="bold" fill="#000000" text-anchor="start" >C1</text>
<text x="433" y="418.8" font-family="Liberation Sans" font-size="12" font-weight="bold" fill="#000000" text-anchor="start" >2200uF</text>
<text x="679" y="415.8" font-family="Liberation Sans" font-size="12" font-weight="bold" fill="#000000" text-anchor="start" >C8</text>
<text x="671" y="431.8" font-family="Liberation Sans" font-size="12" font-weight="bold" fill="#000000" text-anchor="start" >10uF</text>
<text x="776" y="406.8" font-family="Liberation Sans" font-size="12" font-weight="bold" fill="#000000" text-anchor="start" >R2</text>
<text x="776" y="421.8" font-family="Liberation Sans" font-size="12" font-weight="bold" fill="#000000" text-anchor="start" >1kΩ</text>
<text x="688" y="525.8" font-family="Liberation Sans" font-size="12" font-weight="bold" fill="#000000" text-anchor="start" >C9</text>
<text x="660" y="587.8" font-family="Liberation Sans" font-size="12" font-weight="bold" fill="#000000" text-anchor="start" >10uF</text>
<text x="793" y="558.8" font-family="Liberation Sans" font-size="12" font-weight="bold" fill="#000000" text-anchor="start" >R4</text>
<text x="793" y="573.8" font-family="Liberation Sans" font-size="12" font-weight="bold" fill="#000000" text-anchor="start" >1kΩ</text>
<text x="643" y="164.5" font-family="Liberation Sans" font-size="11" font-weight="normal" fill="#222" text-anchor="start" >60 %</text>
<text x="568" y="28.8" font-family="Liberation Sans" font-size="12" font-weight="bold" fill="#0000ff" text-anchor="start" letter-spacing="0.2">U4</text>
<text x="513" y="45.8" font-family="Liberation Sans" font-size="12" font-weight="bold" fill="#0000ff" text-anchor="start" letter-spacing="0.2">LM1084IT-ADJ/NOPB</text>
<text x="383" y="199.8" font-family="Liberation Sans" font-size="12" font-weight="bold" fill="#0000ff" text-anchor="start" letter-spacing="0.2">MDA2500</text>
<text x="404" y="214.8" font-family="Liberation Sans" font-size="12" font-weight="bold" fill="#0000ff" text-anchor="start" letter-spacing="0.2">D7</text>
<text x="585" y="197.8" font-family="Liberation Sans" font-size="12" font-weight="bold" fill="#0000ff" text-anchor="start" letter-spacing="0.2">U2</text>
<text x="561" y="214.8" font-family="Liberation Sans" font-size="12" font-weight="bold" fill="#0000ff" text-anchor="start" letter-spacing="0.2">LM7805CT</text>
<text x="593" y="349.8" font-family="Liberation Sans" font-size="12" font-weight="bold" fill="#0000ff" text-anchor="start" letter-spacing="0.2">U3</text>
<text x="569" y="365.8" font-family="Liberation Sans" font-size="12" font-weight="bold" fill="#0000ff" text-anchor="start" letter-spacing="0.2">LM7812CT</text>
<text x="592" y="492.8" font-family="Liberation Sans" font-size="12" font-weight="bold" fill="#0000ff" text-anchor="start" letter-spacing="0.2">U5</text>
<text x="569" y="509.8" font-family="Liberation Sans" font-size="12" font-weight="bold" fill="#0000ff" text-anchor="start" letter-spacing="0.2">LM7912CT</text>
<text x="814" y="132.8" font-family="Liberation Sans" font-size="12" font-weight="bold" fill="#008000" text-anchor="start" >X1</text>
<text x="797" y="309.8" font-family="Liberation Sans" font-size="12" font-weight="bold" fill="#008000" text-anchor="start" >X2</text>
<text x="789" y="453.8" font-family="Liberation Sans" font-size="12" font-weight="bold" fill="#008000" text-anchor="start" >X3</text>
<text x="847" y="596.8" font-family="Liberation Sans" font-size="12" font-weight="bold" fill="#008000" text-anchor="start" >X4</text>
<text x="814" y="147.8" font-family="Liberation Sans" font-size="12.5" font-weight="normal" fill="#008000" text-anchor="start" >LED</text>
<text x="797" y="325.8" font-family="Liberation Sans" font-size="12.5" font-weight="normal" fill="#008000" text-anchor="start" >LED</text>
<text x="789" y="468.8" font-family="Liberation Sans" font-size="12.5" font-weight="normal" fill="#008000" text-anchor="start" >LED</text>
<text x="847" y="611.8" font-family="Liberation Sans" font-size="12.5" font-weight="normal" fill="#008000" text-anchor="start" >LED</text>
<g opacity="0.14" fill="#000" stroke="none">
<text x="634" y="627" font-family="Liberation Sans" font-weight="bold" font-size="29" textLength="167" lengthAdjust="spacingAndGlyphs">mostaql.com</text>
<path d="M662.5 552 V590" stroke="#000" stroke-width="9" stroke-linecap="round" fill="none"/>
<path d="M652 568 A15 15 0 1 0 666 593" stroke="#000" stroke-width="9" stroke-linecap="round" fill="none"/>
<rect x="660" y="588" width="128" height="9"/>
<rect x="689.5" y="571" width="9" height="22" rx="4.5"/>
<rect x="710.5" y="571" width="9" height="22" rx="4.5"/>
<rect x="731.5" y="571" width="9" height="22" rx="4.5"/>
<circle cx="787" cy="584" r="10" stroke="#000" stroke-width="8" fill="none"/>
<circle cx="684" cy="555.5" r="5"/>
<circle cx="695" cy="556" r="5"/>
<circle cx="714" cy="567" r="5"/>
<circle cx="724" cy="567" r="5"/>
</g>
</svg>
<div id="right"></div><div id="topbar"></div>
<div class="win" style="left:952px;top:21px">
<div class="title">Multimeter-XMM1</div>
<svg class="close" width="14" height="14" viewBox="0 0 14 14"><path d="M1 1 L13 13 M13 1 L1 13" stroke="#8a8a8a" stroke-width="1.1"/></svg>
<div class="disp"><div class="blk">5.002 V</div></div>
<div class="g1"></div><div class="g2"></div>
<div class="btn" style="left:22px;top:92px;width:32px;height:24px;line-height:22px;font-size:12px">A</div>
<div class="btn sel" style="left:65px;top:92px;width:32px;height:24px;line-height:22px;font-size:12px">V</div>
<div class="btn" style="left:109px;top:92px;width:32px;height:24px;line-height:22px;font-size:12px">Ω</div>
<div class="btn" style="left:153px;top:92px;width:32px;height:24px;line-height:22px;font-size:12px">dB</div>
<div class="btn" style="left:48px;top:128px;width:48px;height:17px"><svg width="24" height="10" viewBox="0 0 24 10" style="position:absolute;left:12px;top:3px"><path d="M1 6.8 L6.5 2.2 Q8 1.2 9.5 2.2 L14 6.6 Q15.5 7.8 17 6.8 L22 3.6" stroke="#000" stroke-width="1.5" fill="none" stroke-linejoin="round"/></svg></div>
<div class="btn sel" style="left:111px;top:128px;width:46px;height:17px"><div style="position:absolute;left:11px;top:7px;width:23px;height:2px;background:#000"></div></div>
<div class="btn" style="left:64px;top:166px;width:81px;height:22px;font-size:13px;line-height:21px">Set...</div>
<div class="pm" style="left:12px;top:162px">+</div>
<div class="pm" style="left:190px;top:165px">&#8211;</div>
<div class="term" style="left:8px;top:179px"></div>
<div class="term" style="left:182.7px;top:181px"></div>
<svg style="position:absolute;left:196px;top:193px" width="10" height="10"><g fill="#b4b4b4"><rect x="7" y="0.5" width="2" height="2"/><rect x="4" y="3.5" width="2" height="2"/><rect x="7" y="3.5" width="2" height="2"/><rect x="1" y="6.5" width="2" height="2"/><rect x="4" y="6.5" width="2" height="2"/><rect x="7" y="6.5" width="2" height="2"/></g></svg>
</div>
<div class="win" style="left:1206px;top:27px">
<div class="title">Multimeter-XMM2</div>
<svg class="close" width="14" height="14" viewBox="0 0 14 14"><path d="M1 1 L13 13 M13 1 L1 13" stroke="#8a8a8a" stroke-width="1.1"/></svg>
<div class="disp"><div class="blk">12.437 V</div></div>
<div class="g1"></div><div class="g2"></div>
<div class="btn" style="left:22px;top:92px;width:32px;height:24px;line-height:22px;font-size:12px">A</div>
<div class="btn sel" style="left:65px;top:92px;width:32px;height:24px;line-height:22px;font-size:12px">V</div>
<div class="btn" style="left:109px;top:92px;width:32px;height:24px;line-height:22px;font-size:12px">Ω</div>
<div class="btn" style="left:153px;top:92px;width:32px;height:24px;line-height:22px;font-size:12px">dB</div>
<div class="btn" style="left:48px;top:128px;width:48px;height:17px"><svg width="24" height="10" viewBox="0 0 24 10" style="position:absolute;left:12px;top:3px"><path d="M1 6.8 L6.5 2.2 Q8 1.2 9.5 2.2 L14 6.6 Q15.5 7.8 17 6.8 L22 3.6" stroke="#000" stroke-width="1.5" fill="none" stroke-linejoin="round"/></svg></div>
<div class="btn sel" style="left:111px;top:128px;width:46px;height:17px"><div style="position:absolute;left:11px;top:7px;width:23px;height:2px;background:#000"></div></div>
<div class="btn" style="left:64px;top:166px;width:81px;height:22px;font-size:13px;line-height:21px">Set...</div>
<div class="pm" style="left:12px;top:162px">+</div>
<div class="pm" style="left:190px;top:165px">&#8211;</div>
<div class="term" style="left:8px;top:179px"></div>
<div class="term" style="left:182.7px;top:181px"></div>
<svg style="position:absolute;left:196px;top:193px" width="10" height="10"><g fill="#b4b4b4"><rect x="7" y="0.5" width="2" height="2"/><rect x="4" y="3.5" width="2" height="2"/><rect x="7" y="3.5" width="2" height="2"/><rect x="1" y="6.5" width="2" height="2"/><rect x="4" y="6.5" width="2" height="2"/><rect x="7" y="6.5" width="2" height="2"/></g></svg>
</div>
<div class="win" style="left:954px;top:317px">
<div class="title">Multimeter-XMM3</div>
<svg class="close" width="14" height="14" viewBox="0 0 14 14"><path d="M1 1 L13 13 M13 1 L1 13" stroke="#8a8a8a" stroke-width="1.1"/></svg>
<div class="disp"><div class="blk">9.229 V</div></div>
<div class="g1"></div><div class="g2"></div>
<div class="btn" style="left:22px;top:92px;width:32px;height:24px;line-height:22px;font-size:12px">A</div>
<div class="btn sel" style="left:65px;top:92px;width:32px;height:24px;line-height:22px;font-size:12px">V</div>
<div class="btn" style="left:109px;top:92px;width:32px;height:24px;line-height:22px;font-size:12px">Ω</div>
<div class="btn" style="left:153px;top:92px;width:32px;height:24px;line-height:22px;font-size:12px">dB</div>
<div class="btn" style="left:48px;top:128px;width:48px;height:17px"><svg width="24" height="10" viewBox="0 0 24 10" style="position:absolute;left:12px;top:3px"><path d="M1 6.8 L6.5 2.2 Q8 1.2 9.5 2.2 L14 6.6 Q15.5 7.8 17 6.8 L22 3.6" stroke="#000" stroke-width="1.5" fill="none" stroke-linejoin="round"/></svg></div>
<div class="btn sel" style="left:111px;top:128px;width:46px;height:17px"><div style="position:absolute;left:11px;top:7px;width:23px;height:2px;background:#000"></div></div>
<div class="btn" style="left:64px;top:166px;width:81px;height:22px;font-size:13px;line-height:21px">Set...</div>
<div class="pm" style="left:12px;top:162px">+</div>
<div class="pm" style="left:190px;top:165px">&#8211;</div>
<div class="term" style="left:8px;top:179px"></div>
<div class="term" style="left:182.7px;top:181px"></div>
<svg style="position:absolute;left:196px;top:193px" width="10" height="10"><g fill="#b4b4b4"><rect x="7" y="0.5" width="2" height="2"/><rect x="4" y="3.5" width="2" height="2"/><rect x="7" y="3.5" width="2" height="2"/><rect x="1" y="6.5" width="2" height="2"/><rect x="4" y="6.5" width="2" height="2"/><rect x="7" y="6.5" width="2" height="2"/></g></svg>
</div>
<div class="win" style="left:1203px;top:315px">
<div class="title">Multimeter-XMM4</div>
<svg class="close" width="14" height="14" viewBox="0 0 14 14"><path d="M1 1 L13 13 M13 1 L1 13" stroke="#8a8a8a" stroke-width="1.1"/></svg>
<div class="disp"><div class="blk">-12.572 V</div></div>
<div class="g1"></div><div class="g2"></div>
<div class="btn" style="left:22px;top:92px;width:32px;height:24px;line-height:22px;font-size:12px">A</div>
<div class="btn sel" style="left:65px;top:92px;width:32px;height:24px;line-height:22px;font-size:12px">V</div>
<div class="btn" style="left:109px;top:92px;width:32px;height:24px;line-height:22px;font-size:12px">Ω</div>
<div class="btn" style="left:153px;top:92px;width:32px;height:24px;line-height:22px;font-size:12px">dB</div>
<div class="btn" style="left:48px;top:128px;width:48px;height:17px"><svg width="24" height="10" viewBox="0 0 24 10" style="position:absolute;left:12px;top:3px"><path d="M1 6.8 L6.5 2.2 Q8 1.2 9.5 2.2 L14 6.6 Q15.5 7.8 17 6.8 L22 3.6" stroke="#000" stroke-width="1.5" fill="none" stroke-linejoin="round"/></svg></div>
<div class="btn sel" style="left:111px;top:128px;width:46px;height:17px"><div style="position:absolute;left:11px;top:7px;width:23px;height:2px;background:#000"></div></div>
<div class="btn" style="left:64px;top:166px;width:81px;height:22px;font-size:13px;line-height:21px">Set...</div>
<div class="pm" style="left:12px;top:162px">+</div>
<div class="pm" style="left:190px;top:165px">&#8211;</div>
<div class="term" style="left:8px;top:179px"></div>
<div class="term" style="left:182.7px;top:181px"></div>
<svg style="position:absolute;left:196px;top:193px" width="10" height="10"><g fill="#b4b4b4"><rect x="7" y="0.5" width="2" height="2"/><rect x="4" y="3.5" width="2" height="2"/><rect x="7" y="3.5" width="2" height="2"/><rect x="1" y="6.5" width="2" height="2"/><rect x="4" y="6.5" width="2" height="2"/><rect x="7" y="6.5" width="2" height="2"/></g></svg>
</div>
</body></html>
